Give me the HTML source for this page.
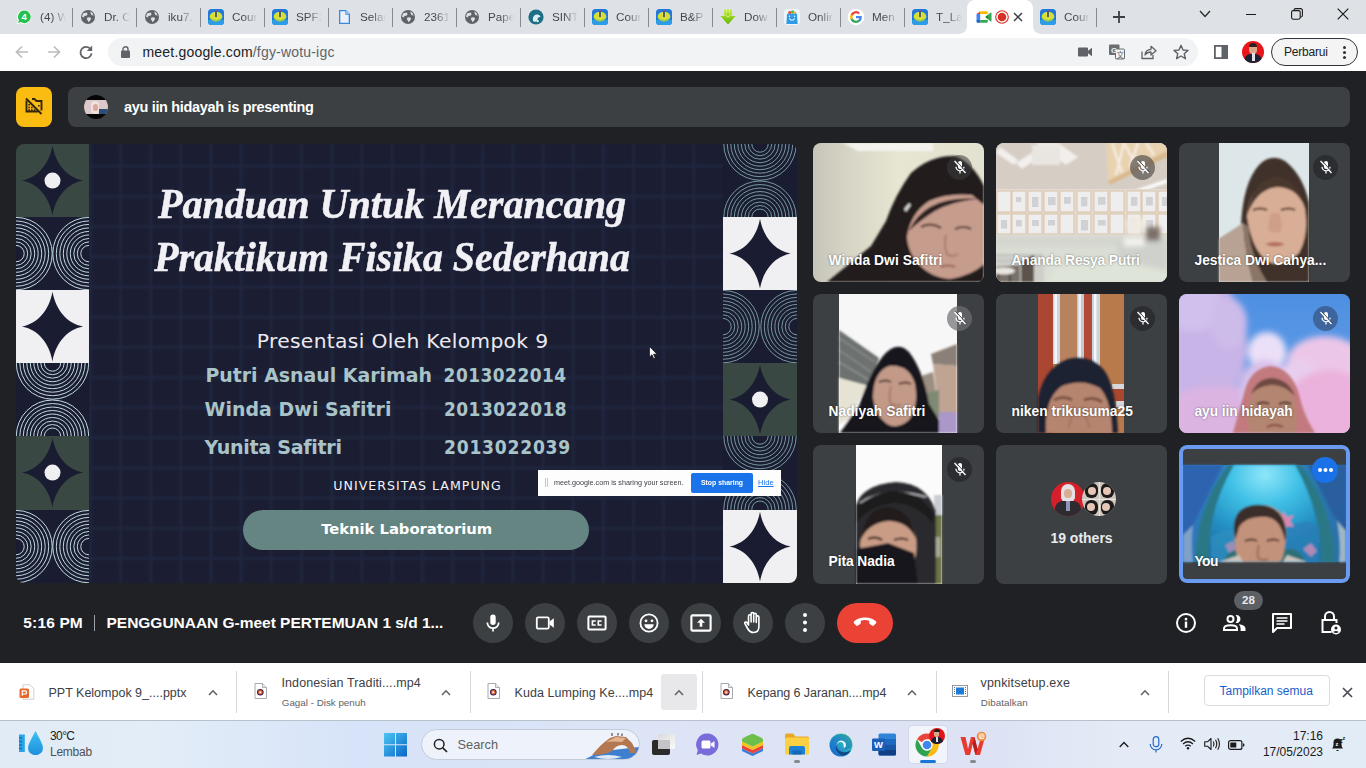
<!DOCTYPE html>
<html lang="id">
<head>
<meta charset="utf-8">
<title>Meet - fgy-wotu-igc</title>
<style>
*{box-sizing:border-box;margin:0;padding:0}
html,body{width:1366px;height:768px;overflow:hidden;background:#202124;font-family:"Liberation Sans","DejaVu Sans",sans-serif}
.abs,#root div,#root svg,#root span.a{position:absolute}
#root{position:relative;width:1366px;height:768px;overflow:hidden}
svg{overflow:visible}
/* ---------- chrome tab strip ---------- */
#tabs{left:0;top:0;width:1366px;height:34px;background:#dee1e6}
.tab{top:0;height:34px;width:64px}
.tab .fav{left:6px;top:9px;width:16px;height:16px}
.tab .tt{left:32px;top:8px;width:26px;height:18px;font-size:11.700px;line-height:18px;color:#45494d;white-space:nowrap;overflow:hidden;
 -webkit-mask-image:linear-gradient(90deg,#000 45%,transparent 100%);mask-image:linear-gradient(90deg,#000 45%,transparent 100%)}
.tab .sep{left:64px;top:8px;width:1px;height:19px;background:#878b90}
/* ---------- toolbar ---------- */
#toolbar{left:0;top:34px;width:1366px;height:37px;background:#fff}
#omni{left:108px;top:4px;width:1090px;height:28px;border-radius:14px;background:#f1f3f4}
/* ---------- meet ---------- */
#meet{left:0;top:71px;width:1366px;height:592px;background:#202124}
.tile{width:171px;height:139px;border-radius:8px;background:#3c4043;overflow:hidden}
.tile .nm{left:16px;bottom:13px;font-size:13px;font-weight:bold;color:#fff;white-space:nowrap;text-shadow:0 0 2px rgba(0,0,0,.55);letter-spacing:-.1px}
.tile .mic{right:13px;top:12px;width:26px;height:26px;border-radius:13px;background:rgba(32,33,36,.62)}
.cbtn{top:532px;width:40px;height:40px;border-radius:20px;background:#3c4043}
/* ---------- downloads ---------- */
#dl{left:0;top:663px;width:1366px;height:57px;background:#fff}
.t1{font-size:12.500px;color:#3c4043;white-space:nowrap;line-height:16px}
.t2{font-size:9.800px;color:#5f6368;white-space:nowrap;line-height:13px}
.dsep{top:8px;width:1px;height:42px;background:#d5d7db}
/* ---------- taskbar ---------- */
#task{left:0;top:720px;width:1366px;height:48px;border-top:1px solid #b9c1cc;background:linear-gradient(90deg,#e0ebf6 0%,#e3edf8 11%,#d7e3f8 26%,#dde4f6 50%,#dde3f4 73%,#e4ebf6 82%,#e2ecf6 100%)}
</style>
</head>
<body>
<div id="root">
<svg style="left:0;top:0;width:0;height:0"><defs><filter id="b1" x="-20%" y="-20%" width="140%" height="140%"><feGaussianBlur stdDeviation="1"/></filter><filter id="b2" x="-20%" y="-20%" width="140%" height="140%"><feGaussianBlur stdDeviation="2.500"/></filter><filter id="b5" x="-30%" y="-30%" width="160%" height="160%"><feGaussianBlur stdDeviation="3.200"/></filter></defs></svg>
<div id="tabs">
<div class="tab" style="left:8px"><svg class="fav" style="left:8px" viewBox="0 0 16 16"><path d="M8.2 0.8 A7 7 0 1 1 4.6 13.9 L0.8 15.2 2.1 11.5 A7 7 0 0 1 8.2 0.8Z" fill="#fff"/><path d="M8.2 1.6 A6.3 6.3 0 1 1 4.8 13.1 L2 14 3 11.3 A6.3 6.3 0 0 1 8.2 1.6Z" fill="#25c14f"/><text x="8.2" y="11.2" font-size="9.5" font-weight="bold" fill="#fff" text-anchor="middle" font-family="Liberation Sans, sans-serif">4</text></svg><div class="tt">(4) W</div><div class="sep"></div></div>
<div class="tab" style="left:72px"><svg class="fav" style="left:8px" viewBox="0 0 16 16"><circle cx="8" cy="8" r="7" fill="#5f6368"/><path d="M3.2 4.2 L6.6 3.4 7.6 5 6.8 6.6 4.6 7 3.6 8.6 2 7.6Z M7.4 8.4 L10 8.2 11.2 9.6 10 11.8 8.6 13.2 7.8 11.4 6.8 10.2Z M10.4 2.6 L12.6 4 13.6 6.6 11.8 6.2 10.6 4.6Z" fill="#dee1e6"/></svg><div class="tt">Dr. C</div><div class="sep"></div></div>
<div class="tab" style="left:136px"><svg class="fav" style="left:8px" viewBox="0 0 16 16"><circle cx="8" cy="8" r="7" fill="#5f6368"/><path d="M3.2 4.2 L6.6 3.4 7.6 5 6.8 6.6 4.6 7 3.6 8.6 2 7.6Z M7.4 8.4 L10 8.2 11.2 9.6 10 11.8 8.6 13.2 7.8 11.4 6.8 10.2Z M10.4 2.6 L12.6 4 13.6 6.6 11.8 6.2 10.6 4.6Z" fill="#dee1e6"/></svg><div class="tt">iku7.</div><div class="sep"></div></div>
<div class="tab" style="left:200px"><svg class="fav" style="left:8px" viewBox="0 0 16 16"><rect x="0" y="0" width="16" height="16" rx="3.500" fill="#1f78de"/><path d="M0 11 H16 V12.500 A3.500 3.500 0 0 1 12.500 16 H3.500 A3.500 3.500 0 0 1 0 12.500Z" fill="#2c9bea"/><ellipse cx="8" cy="7.600" rx="6.300" ry="4.900" fill="#d9df38"/><path d="M1.900 8.800 Q8 13.500 14.100 8.800 Q13 12.300 8 12.500 Q3 12.300 1.900 8.800Z" fill="#7fc45a"/><rect x="7.300" y="2" width="1.400" height="6" fill="#1d2f7a"/><rect x="7.300" y="1.200" width="1.400" height="1.600" fill="#b0306a"/></svg><div class="tt">Cour</div><div class="sep"></div></div>
<div class="tab" style="left:264px"><svg class="fav" style="left:8px" viewBox="0 0 16 16"><rect x="0" y="0" width="16" height="16" rx="3.500" fill="#1f78de"/><path d="M0 11 H16 V12.500 A3.500 3.500 0 0 1 12.500 16 H3.500 A3.500 3.500 0 0 1 0 12.500Z" fill="#2c9bea"/><ellipse cx="8" cy="7.600" rx="6.300" ry="4.900" fill="#d9df38"/><path d="M1.900 8.800 Q8 13.500 14.100 8.800 Q13 12.300 8 12.500 Q3 12.300 1.900 8.800Z" fill="#7fc45a"/><rect x="7.300" y="2" width="1.400" height="6" fill="#1d2f7a"/><rect x="7.300" y="1.200" width="1.400" height="1.600" fill="#b0306a"/></svg><div class="tt">SPF2</div><div class="sep"></div></div>
<div class="tab" style="left:328px"><svg class="fav" style="left:8px" viewBox="0 0 16 16"><path d="M3 1 H10 L14 5 V15 H3Z" fill="#3b86e0"/><path d="M4.3 2.3 H9.4 V5.7 H12.7 V13.7 H4.3Z" fill="#e9f2fc"/><path d="M10 1 L14 5 H10Z" fill="#8fbdf0"/></svg><div class="tt">Selar</div><div class="sep"></div></div>
<div class="tab" style="left:392px"><svg class="fav" style="left:8px" viewBox="0 0 16 16"><circle cx="8" cy="8" r="7" fill="#5f6368"/><path d="M3.2 4.2 L6.6 3.4 7.6 5 6.8 6.6 4.6 7 3.6 8.6 2 7.6Z M7.4 8.4 L10 8.2 11.2 9.6 10 11.8 8.6 13.2 7.8 11.4 6.8 10.2Z M10.4 2.6 L12.6 4 13.6 6.6 11.8 6.2 10.6 4.6Z" fill="#dee1e6"/></svg><div class="tt">2361</div><div class="sep"></div></div>
<div class="tab" style="left:456px"><svg class="fav" style="left:8px" viewBox="0 0 16 16"><circle cx="8" cy="8" r="7" fill="#5f6368"/><path d="M3.2 4.2 L6.6 3.4 7.6 5 6.8 6.6 4.6 7 3.6 8.6 2 7.6Z M7.4 8.4 L10 8.2 11.2 9.6 10 11.8 8.6 13.2 7.8 11.4 6.8 10.2Z M10.4 2.6 L12.6 4 13.6 6.6 11.8 6.2 10.6 4.6Z" fill="#dee1e6"/></svg><div class="tt">Pape</div><div class="sep"></div></div>
<div class="tab" style="left:520px"><svg class="fav" style="left:8px" viewBox="0 0 16 16"><circle cx="8" cy="8" r="7.6" fill="#1d6f86"/><path d="M5 12 Q4 7 8 5.5 Q12 5 12.5 8 Q10 7.5 9.5 10 Q9 12.5 7 13Z" fill="#dfeef2"/><circle cx="9.6" cy="12" r="1.2" fill="#dfeef2"/></svg><div class="tt">SINT</div><div class="sep"></div></div>
<div class="tab" style="left:584px"><svg class="fav" style="left:8px" viewBox="0 0 16 16"><rect x="0" y="0" width="16" height="16" rx="3.500" fill="#1f78de"/><path d="M0 11 H16 V12.500 A3.500 3.500 0 0 1 12.500 16 H3.500 A3.500 3.500 0 0 1 0 12.500Z" fill="#2c9bea"/><ellipse cx="8" cy="7.600" rx="6.300" ry="4.900" fill="#d9df38"/><path d="M1.900 8.800 Q8 13.500 14.100 8.800 Q13 12.300 8 12.500 Q3 12.300 1.900 8.800Z" fill="#7fc45a"/><rect x="7.300" y="2" width="1.400" height="6" fill="#1d2f7a"/><rect x="7.300" y="1.200" width="1.400" height="1.600" fill="#b0306a"/></svg><div class="tt">Cour</div><div class="sep"></div></div>
<div class="tab" style="left:648px"><svg class="fav" style="left:8px" viewBox="0 0 16 16"><rect x="0" y="0" width="16" height="16" rx="3.500" fill="#1f78de"/><path d="M0 11 H16 V12.500 A3.500 3.500 0 0 1 12.500 16 H3.500 A3.500 3.500 0 0 1 0 12.500Z" fill="#2c9bea"/><ellipse cx="8" cy="7.600" rx="6.300" ry="4.900" fill="#d9df38"/><path d="M1.900 8.800 Q8 13.500 14.100 8.800 Q13 12.300 8 12.500 Q3 12.300 1.900 8.800Z" fill="#7fc45a"/><rect x="7.300" y="2" width="1.400" height="6" fill="#1d2f7a"/><rect x="7.300" y="1.200" width="1.400" height="1.600" fill="#b0306a"/></svg><div class="tt">B&amp;P</div><div class="sep"></div></div>
<div class="tab" style="left:712px"><svg class="fav" style="left:8px" viewBox="0 0 16 16"><defs><linearGradient id="dg" x1="0" y1="0" x2="0" y2="1"><stop offset="0" stop-color="#c4ee3a"/><stop offset="1" stop-color="#5fb400"/></linearGradient></defs><path d="M4.200 0.500 H11.800 V7 H15.600 L8 15.500 L0.400 7 H4.200Z" fill="url(#dg)"/><path d="M6.500 0.500 V4 M9.500 0.500 V4" stroke="#e9f9a8" stroke-width=".8"/><path d="M4.500 5 L8 8.200 L11.500 5" fill="none" stroke="#e4f79a" stroke-width=".9"/></svg><div class="tt">Dow</div><div class="sep"></div></div>
<div class="tab" style="left:776px"><svg class="fav" style="left:8px" viewBox="0 0 16 16"><rect x="0" y="0" width="16" height="16" rx="4" fill="#eef6fd"/><circle cx="5.800" cy="3.600" r="1.700" fill="#e84a3a"/><circle cx="8.600" cy="3" r="1.700" fill="#59b846"/><circle cx="10.800" cy="4" r="1.500" fill="#f2b632"/><path d="M3 4.800 H13 L13.600 15 H2.400Z" fill="#2f9be8"/><path d="M5.300 9.500 Q8 13 10.700 9.500" fill="none" stroke="#fff" stroke-width="1.200"/><circle cx="5.500" cy="7.300" r=".7" fill="#fff"/><circle cx="10.500" cy="7.300" r=".7" fill="#fff"/></svg><div class="tt">Onlir</div><div class="sep"></div></div>
<div class="tab" style="left:840px"><svg class="fav" style="left:8px" viewBox="0 0 16 16"><circle cx="8" cy="8" r="8.300" fill="#fff"/><g transform="translate(1.400 1.400) scale(.825)"><path d="M15 8.2 c0-.5 0-1-.1-1.4 H8 v2.8 h3.9 a3.4 3.4 0 0 1-1.4 2.2 v1.8 h2.3 A7 7 0 0 0 15 8.200Z" fill="#4285f4"/><path d="M8 15.2 c1.900 0 3.600-.6 4.800-1.700 l-2.300-1.800 c-.7.400-1.500.7-2.500.7 a4.300 4.300 0 0 1-4-3 H1.600 v1.900 A7.200 7.200 0 0 0 8 15.200Z" fill="#34a853"/><path d="M4 9.400 a4.300 4.300 0 0 1 0-2.800 V4.700 H1.600 a7.200 7.200 0 0 0 0 6.500Z" fill="#fbbc05"/><path d="M8 3.600 c1.100 0 2 .4 2.800 1.100 l2-2 A7.200 7.200 0 0 0 1.600 4.700 L4 6.600 a4.300 4.300 0 0 1 4-3Z" fill="#ea4335"/></g></svg><div class="tt">Men</div><div class="sep"></div></div>
<div class="tab" style="left:904px"><svg class="fav" style="left:8px" viewBox="0 0 16 16"><rect x="0" y="0" width="16" height="16" rx="3.500" fill="#1f78de"/><path d="M0 11 H16 V12.500 A3.500 3.500 0 0 1 12.500 16 H3.500 A3.500 3.500 0 0 1 0 12.500Z" fill="#2c9bea"/><ellipse cx="8" cy="7.600" rx="6.300" ry="4.900" fill="#d9df38"/><path d="M1.900 8.800 Q8 13.500 14.100 8.800 Q13 12.300 8 12.500 Q3 12.300 1.900 8.800Z" fill="#7fc45a"/><rect x="7.300" y="2" width="1.400" height="6" fill="#1d2f7a"/><rect x="7.300" y="1.200" width="1.400" height="1.600" fill="#b0306a"/></svg><div class="tt">T_La</div></div>
<div style="left:959px;top:0;width:82px;height:34px"><svg width="82" height="34" viewBox="0 0 82 34" style="left:0;top:0"><path d="M0 34 A8 8 0 0 0 8 26 V8 A8 8 0 0 1 16 0 H66 A8 8 0 0 1 74 8 V26 A8 8 0 0 0 82 34Z" fill="#fff"/></svg></div><div class="tab" style="left:968px"><svg class="fav" style="left:8px" viewBox="0 0 16 16"><path d="M1 5 L4.500 2 H11 V5.500Z" fill="#ea4335" opacity="0"/><path d="M0.500 5 L4.200 2.200 V5Z" fill="#ea4335"/><path d="M4.200 2.200 H10.800 A1 1 0 0 1 11.800 3.200 V5.600 L9.400 8 11.800 10.400 V5 H4.200Z" fill="#fbbc04"/><rect x="4.200" y="5" width="5.300" height="6" fill="#fff"/><path d="M0.500 5 H4.200 V11 H0.500Z" fill="#4285f4"/><path d="M0.500 11 H4.200 V13.800 H1.500 A1 1 0 0 1 0.500 12.800Z" fill="#1967d2"/><path d="M4.200 11 H11.800 V12.800 A1 1 0 0 1 10.800 13.800 H4.200Z" fill="#34a853"/><path d="M9.400 8 L14.600 3.600 A.6.6 0 0 1 15.500 4 V12 A.6.6 0 0 1 14.600 12.400Z" fill="#34a853"/><path d="M9.400 8 L11.800 5.900 V10.100Z" fill="#188038"/></svg><svg style="left:27px;top:10px;width:14px;height:14px" viewBox="0 0 14 14"><circle cx="7" cy="7" r="6.300" fill="none" stroke="#d93025" stroke-width="1.100"/><circle cx="7" cy="7" r="4.300" fill="#d93025"/></svg><svg style="left:45px;top:12px;width:10px;height:10px" viewBox="0 0 10 10"><path d="M1 1 L9 9 M9 1 L1 9" stroke="#3c4043" stroke-width="1.500" fill="none"/></svg></div>
<div class="tab" style="left:1032px"><svg class="fav" style="left:8px" viewBox="0 0 16 16"><rect x="0" y="0" width="16" height="16" rx="3.500" fill="#1f78de"/><path d="M0 11 H16 V12.500 A3.500 3.500 0 0 1 12.500 16 H3.500 A3.500 3.500 0 0 1 0 12.500Z" fill="#2c9bea"/><ellipse cx="8" cy="7.600" rx="6.300" ry="4.900" fill="#d9df38"/><path d="M1.900 8.800 Q8 13.500 14.100 8.800 Q13 12.300 8 12.500 Q3 12.300 1.900 8.800Z" fill="#7fc45a"/><rect x="7.300" y="2" width="1.400" height="6" fill="#1d2f7a"/><rect x="7.300" y="1.200" width="1.400" height="1.600" fill="#b0306a"/></svg><div class="tt">Cour</div><div class="sep"></div></div>
<svg style="left:1112px;top:10px;width:14px;height:14px" viewBox="0 0 14 14"><path d="M7 1 V13 M1 7 H13" stroke="#3c4043" stroke-width="1.800" fill="none"/></svg>
<svg style="left:1199px;top:10px;width:12px;height:8px" viewBox="0 0 12 8"><path d="M1 1 L6 6.500 L11 1" stroke="#2b2b2b" stroke-width="1.300" fill="none"/></svg>
<div style="left:1246px;top:14px;width:10px;height:1px;background:#1b1b1b"></div>
<svg style="left:1291px;top:8px;width:12px;height:12px" viewBox="0 0 12 12"><rect x="0.600" y="2.600" width="8.600" height="8.600" rx="1.600" fill="none" stroke="#1b1b1b" stroke-width="1.100"/><path d="M3 2.600 V2 A1.500 1.500 0 0 1 4.500 0.600 H9.600 A1.800 1.800 0 0 1 11.400 2.400 V7.400 A1.500 1.500 0 0 1 10 9 H9.300" fill="none" stroke="#1b1b1b" stroke-width="1.100"/></svg>
<svg style="left:1337px;top:8px;width:12px;height:12px" viewBox="0 0 12 12"><path d="M0.700 0.700 L11.300 11.300 M11.300 0.700 L0.700 11.300" stroke="#1b1b1b" stroke-width="1.200" fill="none"/></svg>
</div>

<div id="toolbar">
<svg style="left:15px;top:11px;width:14px;height:14px" viewBox="0 0 14 14"><path d="M13 7 H2 M7 1.500 L1.500 7 L7 12.500" fill="none" stroke="#babcbe" stroke-width="1.700"/></svg>
<svg style="left:47px;top:11px;width:14px;height:14px" viewBox="0 0 14 14"><path d="M1 7 H12 M7 1.500 L12.500 7 L7 12.500" fill="none" stroke="#babcbe" stroke-width="1.700"/></svg>
<svg style="left:79px;top:11px;width:14px;height:14px" viewBox="0 0 14 14"><path d="M11.600 4.200 A5.600 5.600 0 1 0 12.600 8.400" fill="none" stroke="#5f6368" stroke-width="1.800"/><path d="M13.200 0.600 V6 H7.800Z" fill="#5f6368"/></svg>
<div id="omni">
<svg style="left:13px;top:8px;width:9px;height:12px" viewBox="0 0 9 12"><rect x="0" y="4.500" width="9" height="7.500" rx="1" fill="#5f6368"/><path d="M2 5 V3.200 A2.500 2.500 0 0 1 7 3.200 V5" fill="none" stroke="#5f6368" stroke-width="1.400"/></svg>
<div id="url" style="left:34.500px;top:5px;height:18px;line-height:18px;font-size:14px;color:#202124;white-space:nowrap;letter-spacing:.19px">meet.google.com<span style="color:#5f6368">/fgy-wotu-igc</span></div>
<!-- right icons in omnibox -->
<svg style="left:970px;top:8px;width:14px;height:12px" viewBox="0 0 14 12"><path d="M0 2.500 A1 1 0 0 1 1 1.500 H9 A1 1 0 0 1 10 2.500 V4.800 L14 1.800 V10.200 L10 7.200 V9.500 A1 1 0 0 1 9 10.500 H1 A1 1 0 0 1 0 9.500Z" fill="#5f6368"/></svg>
<svg style="left:1001px;top:6px;width:16px;height:16px" viewBox="0 0 16 16"><rect x="0" y="0.500" width="10.500" height="10.500" rx="1" fill="#6a6e73"/><rect x="6.500" y="5" width="9" height="10" rx="1" fill="#f1f3f4" stroke="#6a6e73" stroke-width="1"/><text x="5" y="9" font-size="8" font-weight="bold" fill="#f1f3f4" text-anchor="middle" font-family="Liberation Sans, sans-serif">G</text><text x="11.200" y="13.500" font-size="7.500" fill="#5f6368" text-anchor="middle" font-family="Liberation Sans, Noto Sans CJK SC, sans-serif">文</text></svg>
<svg style="left:1033px;top:6px;width:16px;height:16px" viewBox="0 0 16 16"><path d="M1 7.500 V14.500 H12 V11" fill="none" stroke="#5f6368" stroke-width="1.300"/><path d="M4 11 Q4.500 5.500 10 5.300 V2.300 L15 6.800 L10 11 V8 Q6 8 4 11Z" fill="none" stroke="#5f6368" stroke-width="1.300" stroke-linejoin="round"/></svg>
<svg style="left:1065px;top:6px;width:16px;height:16px" viewBox="0 0 16 16"><path d="M8 1.300 L10 6 L15 6.400 L11.200 9.700 L12.400 14.700 L8 12 L3.600 14.700 L4.800 9.700 L1 6.400 L6 6Z" fill="none" stroke="#5f6368" stroke-width="1.400" stroke-linejoin="round"/></svg>
</div>
<!-- side panel -->
<svg style="left:1214px;top:11px;width:14px;height:14px" viewBox="0 0 14 14"><rect x="0.900" y="0.900" width="12.200" height="12.200" fill="none" stroke="#5f6368" stroke-width="1.800"/><rect x="7.500" y="1" width="5.500" height="12" fill="#5f6368"/></svg>
<!-- profile avatar -->
<div style="left:1242px;top:7px;width:22px;height:22px;border-radius:11px;background:#e8151b;overflow:hidden">
 <div style="left:7px;top:3px;width:8px;height:10px;border-radius:4px;background:#d9a98a"></div>
 <div style="left:7px;top:2px;width:8px;height:4px;border-radius:4px 4px 0 0;background:#2a2220"></div>
 <div style="left:2px;top:13px;width:18px;height:12px;border-radius:7px 7px 0 0;background:#1d2233"></div>
 <div style="left:9.500px;top:12px;width:3px;height:8px;background:#dfe3ee"></div>
</div>
<!-- update pill -->
<div style="left:1271px;top:4px;width:87px;height:28px;border-radius:14px;border:1px solid #30343a;background:#f4f4f4">
 <div style="left:12px;top:5px;font-size:12px;line-height:16px;color:#202124;white-space:nowrap;letter-spacing:-.2px">Perbarui</div>
 <div style="left:71px;top:7px;width:3px;height:3px;border-radius:2px;background:#303236;box-shadow:0 5px 0 #303236,0 10px 0 #303236"></div>
</div>
</div>
<div id="meet">
<!-- top bar -->
<div style="left:16px;top:15.500px;width:36px;height:40.500px;border-radius:8px;background:#fbbc12">
<svg style="left:9px;top:10px;width:18px;height:18px" viewBox="0 0 18 18"><path d="M1.500 3.500 V14.500 H13 M7 2 H9.500 L11.500 4 H16.500 V13.500" fill="none" stroke="#33270a" stroke-width="1.900"/><path d="M3.300 7 h1.600 v1.600 h-1.600z M3.300 9.700 h1.600 v1.600 h-1.600z M3.300 12.300 h1.600 v1.600 h-1.600z M6 9.700 h1.600 v1.600 h-1.600z M6 12.300 h1.600 v1.600 h-1.600z M8.700 12.300 h1.600 v1.600 h-1.600z M13 8 h1.600 v1.600 h-1.600z" fill="#33270a"/><path d="M1 1.500 L16.500 17" stroke="#33270a" stroke-width="2"/></svg>
</div>
<div style="left:68px;top:15.500px;width:1282px;height:40.500px;border-radius:8px;background:#3c4043">
 <div style="left:16px;top:8px;width:24px;height:24px;border-radius:12px;background:#050505;overflow:hidden">
  <div style="left:0;top:5px;width:24px;height:14px;background:#dcc9cc"></div>
  <div style="left:7px;top:6px;width:8px;height:13px;border-radius:4px;background:#efe2dc"></div>
  <div style="left:9px;top:9px;width:5px;height:7px;border-radius:3px;background:#e0a79a"></div>
  <div style="left:15px;top:14px;width:9px;height:5px;background:#2b4f78"></div>
 </div>
 <div id="pres" style="left:56px;top:10px;font-size:14.500px;line-height:20px;font-weight:bold;color:#fff;white-space:nowrap;letter-spacing:-.33px">ayu iin hidayah is presenting</div>
</div>
<div id="slide" style="left:16px;top:72.5px;width:781px;height:439.4px;border-radius:8px;overflow:hidden;background:#1b1e33">
<svg style="left:0;top:0;width:781px;height:439.4px;filter:blur(1px)" viewBox="0 0 781 439.4"><g fill="#20273f"><rect x="73.0" y="0" width="2.800" height="439.4"/><rect x="103.2" y="0" width="2.800" height="439.4"/><rect x="133.3" y="0" width="2.800" height="439.4"/><rect x="163.5" y="0" width="2.800" height="439.4"/><rect x="193.7" y="0" width="2.800" height="439.4"/><rect x="223.9" y="0" width="2.800" height="439.4"/><rect x="254.0" y="0" width="2.800" height="439.4"/><rect x="284.2" y="0" width="2.800" height="439.4"/><rect x="314.4" y="0" width="2.800" height="439.4"/><rect x="344.5" y="0" width="2.800" height="439.4"/><rect x="374.7" y="0" width="2.800" height="439.4"/><rect x="404.9" y="0" width="2.800" height="439.4"/><rect x="435.0" y="0" width="2.800" height="439.4"/><rect x="465.2" y="0" width="2.800" height="439.4"/><rect x="495.4" y="0" width="2.800" height="439.4"/><rect x="525.6" y="0" width="2.800" height="439.4"/><rect x="555.7" y="0" width="2.800" height="439.4"/><rect x="585.9" y="0" width="2.800" height="439.4"/><rect x="616.1" y="0" width="2.800" height="439.4"/><rect x="646.2" y="0" width="2.800" height="439.4"/><rect x="676.4" y="0" width="2.800" height="439.4"/><rect x="73" y="20.8" width="635" height="2.800"/><rect x="73" y="51.0" width="635" height="2.800"/><rect x="73" y="81.1" width="635" height="2.800"/><rect x="73" y="111.3" width="635" height="2.800"/><rect x="73" y="141.5" width="635" height="2.800"/><rect x="73" y="171.7" width="635" height="2.800"/><rect x="73" y="201.8" width="635" height="2.800"/><rect x="73" y="232.0" width="635" height="2.800"/><rect x="73" y="262.2" width="635" height="2.800"/><rect x="73" y="292.3" width="635" height="2.800"/><rect x="73" y="322.5" width="635" height="2.800"/><rect x="73" y="352.7" width="635" height="2.800"/><rect x="73" y="382.8" width="635" height="2.800"/><rect x="73" y="413.0" width="635" height="2.800"/></g></svg>
<svg style="left:0px;top:0.00px;width:73px;height:73.53px;overflow:hidden" viewBox="0 0 73 73.53"><rect width="73" height="74.23333333333333" fill="#394842"/><path d="M36.5 1.81666666666667 C40.0 20.6 51.3 33.7 67.1 36.6 C51.3 39.5 40.0 52.6 36.5 71.4 C33.0 52.6 21.7 39.5 5.9 36.6 C21.7 33.7 33.0 20.6 36.5 1.8Z" fill="#1a1d32"/><circle cx="36.5" cy="36.61666666666667" r="8" fill="#f0eff2"/></svg>
<svg style="left:0px;top:73.23px;width:73px;height:73.53px;overflow:hidden" viewBox="0 0 73 73.53"><rect width="73" height="74.23333333333333" fill="#1a1d32"/><g fill="none" stroke="#c2dade" stroke-width="1.0"><circle cx="0" cy="36.61666666666667" r="8.20"/><circle cx="0" cy="36.61666666666667" r="11.70"/><circle cx="0" cy="36.61666666666667" r="15.20"/><circle cx="0" cy="36.61666666666667" r="18.70"/><circle cx="0" cy="36.61666666666667" r="22.20"/><circle cx="0" cy="36.61666666666667" r="25.70"/><circle cx="0" cy="36.61666666666667" r="29.20"/><circle cx="0" cy="36.61666666666667" r="32.70"/><circle cx="0" cy="36.61666666666667" r="36.20"/><circle cx="73" cy="36.61666666666667" r="8.20"/><circle cx="73" cy="36.61666666666667" r="11.70"/><circle cx="73" cy="36.61666666666667" r="15.20"/><circle cx="73" cy="36.61666666666667" r="18.70"/><circle cx="73" cy="36.61666666666667" r="22.20"/><circle cx="73" cy="36.61666666666667" r="25.70"/><circle cx="73" cy="36.61666666666667" r="29.20"/><circle cx="73" cy="36.61666666666667" r="32.70"/><circle cx="73" cy="36.61666666666667" r="36.20"/></g></svg>
<svg style="left:0px;top:146.47px;width:73px;height:73.53px;overflow:hidden" viewBox="0 0 73 73.53"><rect width="73" height="74.23333333333333" fill="#f0eff2"/><path d="M36.5 1.81666666666667 C40.0 20.6 51.3 33.7 67.1 36.6 C51.3 39.5 40.0 52.6 36.5 71.4 C33.0 52.6 21.7 39.5 5.9 36.6 C21.7 33.7 33.0 20.6 36.5 1.8Z" fill="#1a1d32"/></svg>
<svg style="left:0px;top:219.70px;width:73px;height:73.53px;overflow:hidden" viewBox="0 0 73 73.53"><rect width="73" height="74.23333333333333" fill="#1a1d32"/><g fill="none" stroke="#c2dade" stroke-width="1.0"><circle cx="36.5" cy="0" r="8.20"/><circle cx="36.5" cy="0" r="11.70"/><circle cx="36.5" cy="0" r="15.20"/><circle cx="36.5" cy="0" r="18.70"/><circle cx="36.5" cy="0" r="22.20"/><circle cx="36.5" cy="0" r="25.70"/><circle cx="36.5" cy="0" r="29.20"/><circle cx="36.5" cy="0" r="32.70"/><circle cx="36.5" cy="0" r="36.20"/><circle cx="36.5" cy="73.23333333333333" r="8.20"/><circle cx="36.5" cy="73.23333333333333" r="11.70"/><circle cx="36.5" cy="73.23333333333333" r="15.20"/><circle cx="36.5" cy="73.23333333333333" r="18.70"/><circle cx="36.5" cy="73.23333333333333" r="22.20"/><circle cx="36.5" cy="73.23333333333333" r="25.70"/><circle cx="36.5" cy="73.23333333333333" r="29.20"/><circle cx="36.5" cy="73.23333333333333" r="32.70"/><circle cx="36.5" cy="73.23333333333333" r="36.20"/></g></svg>
<svg style="left:0px;top:292.93px;width:73px;height:73.53px;overflow:hidden" viewBox="0 0 73 73.53"><rect width="73" height="74.23333333333333" fill="#394842"/><path d="M36.5 1.81666666666667 C40.0 20.6 51.3 33.7 67.1 36.6 C51.3 39.5 40.0 52.6 36.5 71.4 C33.0 52.6 21.7 39.5 5.9 36.6 C21.7 33.7 33.0 20.6 36.5 1.8Z" fill="#1a1d32"/><circle cx="36.5" cy="36.61666666666667" r="8" fill="#f0eff2"/></svg>
<svg style="left:0px;top:366.17px;width:73px;height:73.53px;overflow:hidden" viewBox="0 0 73 73.53"><rect width="73" height="74.23333333333333" fill="#1a1d32"/><g fill="none" stroke="#c2dade" stroke-width="1.0"><circle cx="0" cy="36.61666666666667" r="8.20"/><circle cx="0" cy="36.61666666666667" r="11.70"/><circle cx="0" cy="36.61666666666667" r="15.20"/><circle cx="0" cy="36.61666666666667" r="18.70"/><circle cx="0" cy="36.61666666666667" r="22.20"/><circle cx="0" cy="36.61666666666667" r="25.70"/><circle cx="0" cy="36.61666666666667" r="29.20"/><circle cx="0" cy="36.61666666666667" r="32.70"/><circle cx="0" cy="36.61666666666667" r="36.20"/><circle cx="73" cy="36.61666666666667" r="8.20"/><circle cx="73" cy="36.61666666666667" r="11.70"/><circle cx="73" cy="36.61666666666667" r="15.20"/><circle cx="73" cy="36.61666666666667" r="18.70"/><circle cx="73" cy="36.61666666666667" r="22.20"/><circle cx="73" cy="36.61666666666667" r="25.70"/><circle cx="73" cy="36.61666666666667" r="29.20"/><circle cx="73" cy="36.61666666666667" r="32.70"/><circle cx="73" cy="36.61666666666667" r="36.20"/></g></svg>
<svg style="left:707px;top:0.00px;width:74px;height:73.53px;overflow:hidden" viewBox="0 0 74 73.53"><rect width="74" height="74.23333333333333" fill="#1a1d32"/><g fill="none" stroke="#8fb6ba" stroke-width="0.8"><circle cx="37.0" cy="0" r="8.20"/><circle cx="37.0" cy="0" r="11.70"/><circle cx="37.0" cy="0" r="15.20"/><circle cx="37.0" cy="0" r="18.70"/><circle cx="37.0" cy="0" r="22.20"/><circle cx="37.0" cy="0" r="25.70"/><circle cx="37.0" cy="0" r="29.20"/><circle cx="37.0" cy="0" r="32.70"/><circle cx="37.0" cy="0" r="36.20"/><circle cx="37.0" cy="73.23333333333333" r="8.20"/><circle cx="37.0" cy="73.23333333333333" r="11.70"/><circle cx="37.0" cy="73.23333333333333" r="15.20"/><circle cx="37.0" cy="73.23333333333333" r="18.70"/><circle cx="37.0" cy="73.23333333333333" r="22.20"/><circle cx="37.0" cy="73.23333333333333" r="25.70"/><circle cx="37.0" cy="73.23333333333333" r="29.20"/><circle cx="37.0" cy="73.23333333333333" r="32.70"/><circle cx="37.0" cy="73.23333333333333" r="36.20"/></g></svg>
<svg style="left:707px;top:73.23px;width:74px;height:73.53px;overflow:hidden" viewBox="0 0 74 73.53"><rect width="74" height="74.23333333333333" fill="#f0eff2"/><path d="M37.0 1.81666666666667 C40.5 20.6 51.8 33.7 67.6 36.6 C51.8 39.5 40.5 52.6 37.0 71.4 C33.5 52.6 22.2 39.5 6.4 36.6 C22.2 33.7 33.5 20.6 37.0 1.8Z" fill="#1a1d32"/></svg>
<svg style="left:707px;top:146.47px;width:74px;height:73.53px;overflow:hidden" viewBox="0 0 74 73.53"><rect width="74" height="74.23333333333333" fill="#1a1d32"/><g fill="none" stroke="#8fb6ba" stroke-width="0.8"><circle cx="0" cy="36.61666666666667" r="8.20"/><circle cx="0" cy="36.61666666666667" r="11.70"/><circle cx="0" cy="36.61666666666667" r="15.20"/><circle cx="0" cy="36.61666666666667" r="18.70"/><circle cx="0" cy="36.61666666666667" r="22.20"/><circle cx="0" cy="36.61666666666667" r="25.70"/><circle cx="0" cy="36.61666666666667" r="29.20"/><circle cx="0" cy="36.61666666666667" r="32.70"/><circle cx="0" cy="36.61666666666667" r="36.20"/><circle cx="74" cy="36.61666666666667" r="8.20"/><circle cx="74" cy="36.61666666666667" r="11.70"/><circle cx="74" cy="36.61666666666667" r="15.20"/><circle cx="74" cy="36.61666666666667" r="18.70"/><circle cx="74" cy="36.61666666666667" r="22.20"/><circle cx="74" cy="36.61666666666667" r="25.70"/><circle cx="74" cy="36.61666666666667" r="29.20"/><circle cx="74" cy="36.61666666666667" r="32.70"/><circle cx="74" cy="36.61666666666667" r="36.20"/></g></svg>
<svg style="left:707px;top:219.70px;width:74px;height:73.53px;overflow:hidden" viewBox="0 0 74 73.53"><rect width="74" height="74.23333333333333" fill="#394842"/><path d="M37.0 1.81666666666667 C40.5 20.6 51.8 33.7 67.6 36.6 C51.8 39.5 40.5 52.6 37.0 71.4 C33.5 52.6 22.2 39.5 6.4 36.6 C22.2 33.7 33.5 20.6 37.0 1.8Z" fill="#1a1d32"/><circle cx="37.0" cy="36.61666666666667" r="8" fill="#f0eff2"/></svg>
<svg style="left:707px;top:292.93px;width:74px;height:73.53px;overflow:hidden" viewBox="0 0 74 73.53"><rect width="74" height="74.23333333333333" fill="#1a1d32"/><g fill="none" stroke="#8fb6ba" stroke-width="0.8"><circle cx="37.0" cy="0" r="8.20"/><circle cx="37.0" cy="0" r="11.70"/><circle cx="37.0" cy="0" r="15.20"/><circle cx="37.0" cy="0" r="18.70"/><circle cx="37.0" cy="0" r="22.20"/><circle cx="37.0" cy="0" r="25.70"/><circle cx="37.0" cy="0" r="29.20"/><circle cx="37.0" cy="0" r="32.70"/><circle cx="37.0" cy="0" r="36.20"/><circle cx="37.0" cy="73.23333333333333" r="8.20"/><circle cx="37.0" cy="73.23333333333333" r="11.70"/><circle cx="37.0" cy="73.23333333333333" r="15.20"/><circle cx="37.0" cy="73.23333333333333" r="18.70"/><circle cx="37.0" cy="73.23333333333333" r="22.20"/><circle cx="37.0" cy="73.23333333333333" r="25.70"/><circle cx="37.0" cy="73.23333333333333" r="29.20"/><circle cx="37.0" cy="73.23333333333333" r="32.70"/><circle cx="37.0" cy="73.23333333333333" r="36.20"/></g></svg>
<svg style="left:707px;top:366.17px;width:74px;height:73.53px;overflow:hidden" viewBox="0 0 74 73.53"><rect width="74" height="74.23333333333333" fill="#f0eff2"/><path d="M37.0 1.81666666666667 C40.5 20.6 51.8 33.7 67.6 36.6 C51.8 39.5 40.5 52.6 37.0 71.4 C33.5 52.6 22.2 39.5 6.4 36.6 C22.2 33.7 33.5 20.6 37.0 1.8Z" fill="#1a1d32"/></svg>
<div id="t1" style="left:76.2px;top:35.2px;width:600px;text-align:center;font-size:42px;line-height:50px;color:#f1f0f4;white-space:nowrap;transform:scaleX(.955);font-family:'Liberation Serif','DejaVu Serif',serif;font-style:italic;font-weight:bold;-webkit-text-stroke:.55px #f1f0f4">Panduan Untuk Merancang</div>
<div id="t2" style="left:76.1px;top:88.0px;width:600px;text-align:center;font-size:42px;line-height:50px;color:#f1f0f4;white-space:nowrap;transform:scaleX(.948);font-family:'Liberation Serif','DejaVu Serif',serif;font-style:italic;font-weight:bold;-webkit-text-stroke:.55px #f1f0f4">Praktikum Fisika Sederhana</div>
<div id="t3" style="left:240.8px;top:184.2px;font-size:20.300px;line-height:26px;color:#eceaf0;white-space:nowrap;letter-spacing:0.31px;font-family:'DejaVu Sans','Liberation Sans',sans-serif">Presentasi Oleh Kelompok 9</div>
<div id="n0" style="left:189.4px;top:218.5px;font-size:18.9px;letter-spacing:0.015px;line-height:26px;font-weight:bold;color:#a9c4c8;white-space:nowrap;font-family:'DejaVu Sans','Liberation Sans',sans-serif">Putri Asnaul Karimah</div><div id="m0" style="left:427.6px;top:218.5px;font-size:18.9px;letter-spacing:0.48px;line-height:26px;font-weight:bold;color:#a9c4c8;white-space:nowrap;font-family:'DejaVu Sans Condensed','DejaVu Sans',sans-serif;font-stretch:condensed">2013022014</div>
<div id="n1" style="left:188.5px;top:252.3px;font-size:18.9px;letter-spacing:0.08px;line-height:26px;font-weight:bold;color:#a9c4c8;white-space:nowrap;font-family:'DejaVu Sans','Liberation Sans',sans-serif">Winda Dwi Safitri</div><div id="m1" style="left:428.0px;top:252.3px;font-size:18.9px;letter-spacing:0.48px;line-height:26px;font-weight:bold;color:#a9c4c8;white-space:nowrap;font-family:'DejaVu Sans Condensed','DejaVu Sans',sans-serif;font-stretch:condensed">2013022018</div>
<div id="n2" style="left:188.5px;top:291.6px;font-size:19.1px;letter-spacing:-0.3px;line-height:26px;font-weight:bold;color:#a9c4c8;white-space:nowrap;font-family:'DejaVu Sans','Liberation Sans',sans-serif">Yunita Safitri</div><div id="m2" style="left:428.0px;top:291.6px;font-size:19.1px;letter-spacing:0.75px;line-height:26px;font-weight:bold;color:#a9c4c8;white-space:nowrap;font-family:'DejaVu Sans Condensed','DejaVu Sans',sans-serif;font-stretch:condensed">2013022039</div>
<div id="t4" style="left:317.3px;top:333.1px;font-size:12.600px;line-height:18px;color:#f3f2f6;white-space:nowrap;letter-spacing:1.0px;font-family:'DejaVu Sans','Liberation Sans',sans-serif">UNIVERSITAS LAMPUNG</div>
<div style="left:227.4px;top:366.5px;width:345.400px;height:39.800px;border-radius:20px;background:#658582"></div><div id="t5" style="left:305.2px;top:374.9px;font-size:14.800px;line-height:22px;font-weight:bold;color:#fff;white-space:nowrap;letter-spacing:-0.04px;font-family:'DejaVu Sans','Liberation Sans',sans-serif">Teknik Laboratorium</div>
<div style="left:522px;top:326.500px;width:243px;height:26px;background:#fdfdfe;filter:blur(.3px)"><div style="left:7px;top:8px;width:1px;height:9px;background:#c4c7cc;box-shadow:2px 0 0 #c4c7cc"></div><div style="left:16px;top:7px;font-size:7.200px;line-height:12px;color:#3a3d42;white-space:nowrap">meet.google.com is sharing your screen.</div><div style="left:153px;top:3px;width:62px;height:20px;border-radius:2px;background:#1a73e8"><div style="left:0;top:4px;width:62px;text-align:center;font-size:6.900px;line-height:12px;font-weight:bold;color:#fff;white-space:nowrap">Stop sharing</div></div><div style="left:220px;top:7px;font-size:7.600px;line-height:12px;color:#1a73e8;text-decoration:underline;white-space:nowrap">Hide</div></div>
<svg style="left:633px;top:202.500px;width:9px;height:14px" viewBox="0 0 9 14"><path d="M0.500 0.500 V11 L3 8.700 L4.800 12.800 L6.300 12.100 L4.500 8.200 H8Z" fill="#fff" stroke="#111" stroke-width=".7"/></svg>
</div>

<div class="tile" style="left:813px;top:72.3px;height:138.5px"><svg style="left:0px;top:0;width:171px;height:139px" viewBox="0 0 171 139" preserveAspectRatio="none"><defs><linearGradient id="gw1" x1="0" x2="1"><stop offset="0" stop-color="#c6c5b9"/><stop offset=".25" stop-color="#d9d8c8"/><stop offset=".5" stop-color="#e7e6d2"/><stop offset="1" stop-color="#e3e1cf"/></linearGradient></defs>
<rect width="171" height="139" fill="url(#gw1)"/><path d="M30 0 L45 8 H120 V0Z" fill="#f3f2ee" filter="url(#b1)"/>
<g filter="url(#b1)"><path d="M14 139 L58 103 L73 78 Q82 52 98 30 Q118 12 142 13 Q160 20 171 43 V139Z" fill="#231d1e"/>
<path d="M94 93 Q98 70 116 58 Q135 50 159 52 L171 62 V121 Q160 132 137 136 Q112 134 99 112 Q94 102 94 93Z" fill="#c69c8d"/>
<path d="M96 88 Q112 52 165 56 Q140 58 122 68 Q106 78 96 88Z" fill="#2b2223"/>
<path d="M108 84 q10 -5 20 1 M142 86 q9 -4 16 0" stroke="#5b3f3a" stroke-width="2.200" fill="none"/>
<path d="M133 92 q-3 14 2 20 q6 2 10 -1" stroke="#a87c6f" stroke-width="2" fill="none"/>
<path d="M128 124 q8 -3 14 0" stroke="#9a5f5a" stroke-width="2.200" fill="none"/>
<path d="M91 66 l5 -6 l2 2 l-5 7z" fill="#d8d8d8"/></g></svg><div style="left:134px;top:11.500px;width:25px;height:25px;border-radius:13px;background:rgba(60,60,64,.55)"><svg style="left:6px;top:5px;width:14px;height:15px" viewBox="0 0 14 15"><path d="M7 1 A2 2 0 0 1 9 3 V7 A2 2 0 0 1 5 7 V3 A2 2 0 0 1 7 1Z" fill="#fff"/><path d="M3 6.800 A4 4 0 0 0 11 6.800 M7 11 V13.500" fill="none" stroke="#fff" stroke-width="1.300"/><path d="M1.500 1 L12.500 13" stroke="#fff" stroke-width="1.300"/><path d="M2.500 0.200 L13.500 12.200" stroke="#4a4d51" stroke-width="1"/></svg></div><div id="p0" class="nm" style="left:15.500px;top:108.4px;font-size:13.800px;line-height:17px;letter-spacing:0.08px">Winda Dwi Safitri</div></div>
<div class="tile" style="left:996px;top:72.3px;height:138.5px"><svg style="left:0px;top:0;width:171px;height:139px" viewBox="0 0 171 139" preserveAspectRatio="none"><rect width="171" height="139" fill="#ddd5cc"/>
<rect y="0" width="171" height="46" fill="#d6cec5"/>
<g filter="url(#b1)"><path d="M0 10 L18 22 L22 17 L4 4Z M40 0 L70 22 L82 14 L62 0Z M20 20 L42 6 L46 12 L26 26Z" fill="#f2efec"/><rect x="36" y="2" width="28" height="20" fill="#e9e5e0"/>
<path d="M110 0 L112 38 L171 8 V0Z" fill="#e8d2b0"/><path d="M112 38 L171 8 V14 L114 42Z" fill="#d9b98d"/><path d="M116 0 l10 30 M128 0 l-8 32 M128 0 l12 22 M142 0 l-8 24 M150 0 l8 12" stroke="#f4ece0" stroke-width="2.500"/>
<path d="M130 50 L171 36 V40 L130 54Z" fill="#fbfbfb"/></g>
<rect y="46" width="171" height="48" fill="#e4dcd2"/><rect x="1" y="48" width="14" height="21" fill="#efeeee" stroke="#d9c3a8" stroke-width="1"/><rect x="1" y="71" width="14" height="20" fill="#efeeee" stroke="#d9c3a8" stroke-width="1"/><rect x="5" y="77" width="6.1" height="8.6" fill="#9b9ba3" opacity=".35"/><rect x="16" y="48" width="14" height="21" fill="#efeeee" stroke="#d9c3a8" stroke-width="1"/><rect x="20" y="54" width="5.2" height="5.1" fill="#9b9ba3" opacity=".35"/><rect x="16" y="71" width="14" height="20" fill="#efeeee" stroke="#d9c3a8" stroke-width="1"/><rect x="20" y="77" width="5.8" height="6.4" fill="#9b9ba3" opacity=".35"/><rect x="32" y="48" width="14" height="21" fill="#efeeee" stroke="#d9c3a8" stroke-width="1"/><rect x="36" y="54" width="6.4" height="10.0" fill="#9b9ba3" opacity=".35"/><rect x="32" y="71" width="14" height="20" fill="#efeeee" stroke="#d9c3a8" stroke-width="1"/><rect x="36" y="77" width="6.9" height="5.9" fill="#9b9ba3" opacity=".35"/><rect x="48" y="48" width="14" height="21" fill="#efeeee" stroke="#d9c3a8" stroke-width="1"/><rect x="52" y="54" width="7.6" height="8.1" fill="#9b9ba3" opacity=".35"/><rect x="48" y="71" width="14" height="20" fill="#efeeee" stroke="#d9c3a8" stroke-width="1"/><rect x="52" y="77" width="7.0" height="5.4" fill="#9b9ba3" opacity=".35"/><rect x="64" y="48" width="14" height="21" fill="#efeeee" stroke="#d9c3a8" stroke-width="1"/><rect x="68" y="54" width="6.8" height="6.8" fill="#9b9ba3" opacity=".35"/><rect x="64" y="71" width="14" height="20" fill="#efeeee" stroke="#d9c3a8" stroke-width="1"/><rect x="81" y="48" width="14" height="21" fill="#efeeee" stroke="#d9c3a8" stroke-width="1"/><rect x="85" y="54" width="6.4" height="9.3" fill="#9b9ba3" opacity=".35"/><rect x="81" y="71" width="14" height="20" fill="#efeeee" stroke="#d9c3a8" stroke-width="1"/><rect x="85" y="77" width="7.1" height="10.5" fill="#9b9ba3" opacity=".35"/><rect x="98" y="48" width="14" height="21" fill="#efeeee" stroke="#d9c3a8" stroke-width="1"/><rect x="102" y="54" width="7.4" height="7.7" fill="#9b9ba3" opacity=".35"/><rect x="98" y="71" width="14" height="20" fill="#efeeee" stroke="#d9c3a8" stroke-width="1"/><rect x="102" y="77" width="7.6" height="5.6" fill="#9b9ba3" opacity=".35"/><rect x="114" y="48" width="14" height="21" fill="#efeeee" stroke="#d9c3a8" stroke-width="1"/><rect x="114" y="71" width="14" height="20" fill="#efeeee" stroke="#d9c3a8" stroke-width="1"/><rect x="131" y="48" width="14" height="21" fill="#efeeee" stroke="#d9c3a8" stroke-width="1"/><rect x="135" y="54" width="6.3" height="8.8" fill="#9b9ba3" opacity=".35"/><rect x="131" y="71" width="14" height="20" fill="#efeeee" stroke="#d9c3a8" stroke-width="1"/><rect x="135" y="77" width="6.5" height="7.3" fill="#9b9ba3" opacity=".35"/><rect x="146" y="48" width="14" height="21" fill="#efeeee" stroke="#d9c3a8" stroke-width="1"/><rect x="150" y="54" width="6.8" height="8.5" fill="#9b9ba3" opacity=".35"/><rect x="146" y="71" width="14" height="20" fill="#efeeee" stroke="#d9c3a8" stroke-width="1"/><rect x="150" y="77" width="7.0" height="10.6" fill="#9b9ba3" opacity=".35"/><rect x="162" y="48" width="14" height="21" fill="#efeeee" stroke="#d9c3a8" stroke-width="1"/><rect x="166" y="54" width="8.0" height="9.0" fill="#9b9ba3" opacity=".35"/><rect x="162" y="71" width="14" height="20" fill="#efeeee" stroke="#d9c3a8" stroke-width="1"/>
<rect y="93" width="171" height="46" fill="#d9ddd3"/>
<g filter="url(#b2)"><rect x="0" y="93" width="171" height="10" fill="#d4d6cf"/><path d="M60 125 L171 110 V139 H50Z" fill="#dfe4d8"/><path d="M118 96 H171 V128 L125 118Z" fill="#cfd2cc"/><ellipse cx="140" cy="82" rx="10" ry="9" fill="#efeae2"/><rect x="150" y="84" width="14" height="14" fill="#7b6e68"/><rect x="128" y="95" width="20" height="8" fill="#f4f2ee"/></g>
<g filter="url(#b1)"><rect x="0" y="111" width="48" height="28" fill="#cfcfca"/><path d="M0 112 H46 M0 118 H40" stroke="#b9b9b5" stroke-width="1"/><path d="M25 118 L38 112 V139 H25Z" fill="#5d534e"/><path d="M0 124 L24 122 V139 H0Z" fill="#7a716b"/><ellipse cx="8" cy="128" rx="11" ry="3.500" fill="#e9e6e2"/><path d="M2 131 V139 M14 131 V139" stroke="#3d3835" stroke-width="1.500"/></g></svg><div style="left:134px;top:11.500px;width:25px;height:25px;border-radius:13px;background:rgba(95,90,86,.75)"><svg style="left:6px;top:5px;width:14px;height:15px" viewBox="0 0 14 15"><path d="M7 1 A2 2 0 0 1 9 3 V7 A2 2 0 0 1 5 7 V3 A2 2 0 0 1 7 1Z" fill="#fff"/><path d="M3 6.800 A4 4 0 0 0 11 6.800 M7 11 V13.500" fill="none" stroke="#fff" stroke-width="1.300"/><path d="M1.500 1 L12.500 13" stroke="#fff" stroke-width="1.300"/><path d="M2.500 0.200 L13.500 12.200" stroke="#4a4d51" stroke-width="1"/></svg></div><div id="p1" class="nm" style="left:15.500px;top:108.4px;font-size:13.800px;line-height:17px;letter-spacing:-0.12px">Ananda Resya Putri</div></div>
<div class="tile" style="left:1179px;top:72.3px;height:138.5px"><svg style="left:40px;top:0;width:90px;height:139px" viewBox="0 0 90 139" preserveAspectRatio="none"><rect width="90" height="139" fill="#dde7e9"/><g filter="url(#b1)">
<path d="M0 139 V96 L22 82 Q24 40 40 22 Q52 10 66 18 Q84 32 90 60 V139Z" fill="#3f3029"/>
<path d="M0 139 V96 L24 80 Q26 110 34 139Z" fill="#b7a293"/><path d="M24 80 Q26 110 34 139 H48 Q30 110 30 84Z" fill="#8a7466"/>
<path d="M28 74 Q30 44 52 38 Q78 36 86 66 Q90 92 80 110 Q66 124 52 120 Q34 112 28 74Z" fill="#d9ae96"/>
<path d="M28 72 Q34 34 60 34 Q80 38 88 70 Q80 44 58 44 Q38 46 28 72Z" fill="#4a382f"/>
<path d="M34 67 q8 -3 14 0 M62 67 q8 -3 14 0" stroke="#4e342c" stroke-width="2" fill="none"/>
<path d="M52 70 q-4 14 -2 18 q6 4 12 0 q2 -6 -2 -18" fill="#cf9f88"/>
<path d="M46 101 q10 -4 20 0 q-10 5 -20 0z" fill="#b26e62"/></g></svg><div style="left:134px;top:11.500px;width:25px;height:25px;border-radius:13px;background:rgba(32,33,36,.6)"><svg style="left:6px;top:5px;width:14px;height:15px" viewBox="0 0 14 15"><path d="M7 1 A2 2 0 0 1 9 3 V7 A2 2 0 0 1 5 7 V3 A2 2 0 0 1 7 1Z" fill="#fff"/><path d="M3 6.800 A4 4 0 0 0 11 6.800 M7 11 V13.500" fill="none" stroke="#fff" stroke-width="1.300"/><path d="M1.500 1 L12.500 13" stroke="#fff" stroke-width="1.300"/><path d="M2.500 0.200 L13.500 12.200" stroke="#4a4d51" stroke-width="1"/></svg></div><div id="p2" class="nm" style="left:15.500px;top:108.4px;font-size:13.800px;line-height:17px;letter-spacing:-0.01px">Jestica Dwi Cahya...</div></div>
<div class="tile" style="left:813px;top:223.3px;height:138.5px"><svg style="left:26px;top:0;width:118px;height:139px" viewBox="0 0 118 139" preserveAspectRatio="none"><rect width="118" height="139" fill="#f7f7f7"/><g filter="url(#b1)">
<path d="M0 36 L40 64 L30 92 L0 84Z" fill="#6d716f"/><path d="M0 44 L36 68 M0 56 L32 78 M0 68 L30 86" stroke="#8b908d" stroke-width="1.500"/>
<path d="M0 84 L28 92 L10 125 L0 131Z" fill="#e6e2d4"/><path d="M0 131 L10 125 L4 139 H0Z" fill="#fff"/>
<path d="M92 60 L118 50 V72 L94 70Z" fill="#8b8078"/><path d="M94 70 L118 72 V124 L100 120Z" fill="#bfa393"/><path d="M82 82 L94 78 L100 120 L90 116Z" fill="#9a8f80"/><path d="M84 100 L100 96 V124 L88 122Z" fill="#7f8a74"/>
<path d="M100 118 L118 118 V139 H100Z" fill="#ab97c8"/>
<path d="M0 139 L20 112 Q30 80 44 62 Q58 46 70 58 Q84 76 90 110 L100 126 V139Z" fill="#15171b"/>
<path d="M34 104 Q34 78 50 72 Q70 70 76 90 Q80 112 70 126 Q58 136 48 130 Q36 122 34 104Z" fill="#c39a88"/>
<path d="M40 88 q7 -3 12 0 M60 90 q7 -3 12 0" stroke="#4a302b" stroke-width="2" fill="none"/><path d="M52 92 q-3 12 0 18 q6 3 10 0" stroke="#a57c6c" stroke-width="2" fill="none"/><path d="M50 118 q8 -3 14 0" stroke="#a0625c" stroke-width="2.200" fill="none"/></g></svg><div style="left:134px;top:11.500px;width:25px;height:25px;border-radius:13px;background:rgba(110,110,112,.7)"><svg style="left:6px;top:5px;width:14px;height:15px" viewBox="0 0 14 15"><path d="M7 1 A2 2 0 0 1 9 3 V7 A2 2 0 0 1 5 7 V3 A2 2 0 0 1 7 1Z" fill="#fff"/><path d="M3 6.800 A4 4 0 0 0 11 6.800 M7 11 V13.500" fill="none" stroke="#fff" stroke-width="1.300"/><path d="M1.500 1 L12.500 13" stroke="#fff" stroke-width="1.300"/><path d="M2.500 0.200 L13.500 12.200" stroke="#4a4d51" stroke-width="1"/></svg></div><div id="p3" class="nm" style="left:15.500px;top:108.4px;font-size:13.800px;line-height:17px;letter-spacing:0.02px">Nadiyah Safitri</div></div>
<div class="tile" style="left:996px;top:223.3px;height:138.5px"><svg style="left:42px;top:0;width:86px;height:139px" viewBox="0 0 86 139" preserveAspectRatio="none"><rect width="86" height="139" fill="#b6794f"/>
<rect x="0" width="15" height="139" fill="#ab4633"/><rect x="15" width="7" height="70" fill="#cfd5dc"/><rect x="16.500" width="2.500" height="70" fill="#f4f6f9"/>
<rect x="22" width="17" height="70" fill="#b8825f"/><rect x="39" width="7" height="70" fill="#c3cad2"/><rect x="40.500" width="2.500" height="70" fill="#eef1f5"/>
<rect x="46" width="8" height="70" fill="#b14a36"/><rect x="54" width="8" height="72" fill="#cdd3da"/><rect x="56" width="2.500" height="72" fill="#f4f6f9"/>
<rect x="62" width="24" height="139" fill="#b97a4b"/><rect x="74" y="90" width="12" height="5" fill="#d8d8da"/><rect x="74" y="95" width="12" height="12" fill="#a8492f"/><rect x="78" y="107" width="8" height="6" fill="#d8d8da"/>
<g filter="url(#b1)"><path d="M0 139 V104 Q6 74 30 65 Q52 60 66 76 Q78 92 80 139Z" fill="#1d2030"/>
<path d="M8 139 Q6 104 24 92 Q44 84 62 94 Q74 108 74 139Z" fill="#b68570"/>
<path d="M16 106 q10 -5 18 0 M46 106 q10 -4 18 2" stroke="#6b4438" stroke-width="3" fill="none" opacity=".8"/><path d="M36 112 q-3 14 -6 22 M44 112 q4 12 8 22" stroke="#a27460" stroke-width="2" fill="none"/></g></svg><div style="left:134px;top:11.500px;width:25px;height:25px;border-radius:13px;background:rgba(32,33,36,.6)"><svg style="left:6px;top:5px;width:14px;height:15px" viewBox="0 0 14 15"><path d="M7 1 A2 2 0 0 1 9 3 V7 A2 2 0 0 1 5 7 V3 A2 2 0 0 1 7 1Z" fill="#fff"/><path d="M3 6.800 A4 4 0 0 0 11 6.800 M7 11 V13.500" fill="none" stroke="#fff" stroke-width="1.300"/><path d="M1.500 1 L12.500 13" stroke="#fff" stroke-width="1.300"/><path d="M2.500 0.200 L13.500 12.200" stroke="#4a4d51" stroke-width="1"/></svg></div><div id="p4" class="nm" style="left:15.500px;top:108.4px;font-size:13.800px;line-height:17px;letter-spacing:0.015px">niken trikusuma25</div></div>
<div class="tile" style="left:1179px;top:223.3px;height:138.5px"><svg style="left:0px;top:0;width:171px;height:139px" viewBox="0 0 171 139" preserveAspectRatio="none"><defs><linearGradient id="sk" x1="0" y1="0" x2="0" y2="1"><stop offset="0" stop-color="#4f8fe2"/><stop offset=".5" stop-color="#5b9ae6"/><stop offset="1" stop-color="#c9a9e0"/></linearGradient></defs>
<rect width="171" height="139" fill="url(#sk)"/>
<g filter="url(#b5)"><ellipse cx="22" cy="50" rx="46" ry="66" fill="#c8b4e7"/><ellipse cx="14" cy="14" rx="30" ry="24" fill="#cfc0ee"/><ellipse cx="50" cy="30" rx="18" ry="26" fill="#cdbbea"/><ellipse cx="40" cy="122" rx="62" ry="30" fill="#dbb4e2"/>
<ellipse cx="88" cy="58" rx="19" ry="20" fill="#ebe0f8"/><ellipse cx="86" cy="96" rx="26" ry="30" fill="#d8c0ea"/><ellipse cx="146" cy="68" rx="38" ry="26" fill="#ecc6e8"/><ellipse cx="120" cy="80" rx="18" ry="16" fill="#e9cdee"/><ellipse cx="150" cy="112" rx="42" ry="36" fill="#eab2dc"/></g>
<g filter="url(#b1)"><path d="M54 139 Q62 110 66 96 Q72 74 92 72 Q112 74 120 100 Q124 120 136 139Z" fill="#c27a7e"/>
<path d="M70 139 Q66 104 78 92 Q92 82 108 92 Q120 106 116 139Z" fill="#b48671"/><path d="M72 100 Q78 84 94 84 Q110 86 116 102 Q104 90 92 91 Q80 92 72 100Z" fill="#6e4a42"/>
<path d="M78 110 q7 -3 12 0 M100 110 q7 -3 12 0" stroke="#3d2722" stroke-width="2.200" fill="none"/><path d="M88 133 q8 -4 16 0" stroke="#8f4f4c" stroke-width="2.500" fill="none"/></g></svg><div style="left:134px;top:11.500px;width:25px;height:25px;border-radius:13px;background:rgba(50,70,110,.6)"><svg style="left:6px;top:5px;width:14px;height:15px" viewBox="0 0 14 15"><path d="M7 1 A2 2 0 0 1 9 3 V7 A2 2 0 0 1 5 7 V3 A2 2 0 0 1 7 1Z" fill="#fff"/><path d="M3 6.800 A4 4 0 0 0 11 6.800 M7 11 V13.500" fill="none" stroke="#fff" stroke-width="1.300"/><path d="M1.500 1 L12.500 13" stroke="#fff" stroke-width="1.300"/><path d="M2.500 0.200 L13.500 12.200" stroke="#4a4d51" stroke-width="1"/></svg></div><div id="p5" class="nm" style="left:15.500px;top:108.4px;font-size:13.800px;line-height:17px;letter-spacing:-0.1px">ayu iin hidayah</div></div>
<div class="tile" style="left:813px;top:374.2px;height:138.5px"><svg style="left:43px;top:0;width:86px;height:139px" viewBox="0 0 86 139" preserveAspectRatio="none"><rect width="86" height="139" fill="#fbfbfb"/><g filter="url(#b1)">
<rect x="78" y="50" width="8" height="22" fill="#c9ccd0"/><rect x="76" y="70" width="10" height="69" fill="#6c7346"/><rect x="78" y="92" width="6" height="20" fill="#a9ad9a"/>
<path d="M0 139 V60 Q6 40 40 37 Q70 38 80 66 V139Z" fill="#2b2b2d"/><path d="M4 58 Q30 40 70 52" stroke="#bfc3c7" stroke-width="1.500" fill="none"/><path d="M0 62 Q20 46 40 46 Q66 48 78 70 L76 78 Q60 58 38 58 Q14 60 0 78Z" fill="#1a1a1c"/>
<path d="M4 100 Q6 70 30 64 Q54 64 60 92 Q62 112 56 120 H8Z" fill="#c99c86"/><path d="M4 96 Q10 60 34 62 Q56 66 60 94 Q52 76 32 76 Q12 78 4 96Z" fill="#241f1f"/>
<path d="M12 94 q8 -3 14 1 M38 95 q8 -3 14 0" stroke="#3b2722" stroke-width="2.200" fill="none"/>
<path d="M0 104 L22 100 L32 98 L58 108 L62 139 H0Z" fill="#19191b"/></g></svg><div style="left:134px;top:11.500px;width:25px;height:25px;border-radius:13px;background:rgba(32,33,36,.6)"><svg style="left:6px;top:5px;width:14px;height:15px" viewBox="0 0 14 15"><path d="M7 1 A2 2 0 0 1 9 3 V7 A2 2 0 0 1 5 7 V3 A2 2 0 0 1 7 1Z" fill="#fff"/><path d="M3 6.800 A4 4 0 0 0 11 6.800 M7 11 V13.500" fill="none" stroke="#fff" stroke-width="1.300"/><path d="M1.500 1 L12.500 13" stroke="#fff" stroke-width="1.300"/><path d="M2.500 0.200 L13.500 12.200" stroke="#4a4d51" stroke-width="1"/></svg></div><div id="p6" class="nm" style="left:15.500px;top:107.9px;font-size:13.800px;line-height:17px;letter-spacing:-0.06px">Pita Nadia</div></div>
<div class="tile" style="left:996px;top:374.2px;height:138.5px"><div style="left:54.800px;top:37px;width:34px;height:34px;border-radius:17px;background:#d5202c;overflow:hidden"><div style="left:10px;top:2px;width:14px;height:18px;border-radius:7px 7px 5px 5px;background:#e4e0e4"></div><div style="left:13px;top:7px;width:8px;height:9px;border-radius:4px;background:#d9ac94"></div><div style="left:4px;top:19px;width:26px;height:18px;border-radius:8px 8px 0 0;background:#2d2b30"></div><div style="left:15px;top:19px;width:4px;height:10px;background:#8e96b8"></div></div>
<div style="left:86px;top:37px;width:34px;height:34px;border-radius:17px;background:#cfc6bd;overflow:hidden"><div style="left:3px;top:1px;width:13px;height:15px;border-radius:6px;background:#1d1a1c"></div><div style="left:6px;top:5px;width:8px;height:8px;border-radius:4px;background:#e6c6b4"></div><div style="left:19px;top:1px;width:13px;height:15px;border-radius:6px;background:#1d1a1c"></div><div style="left:21px;top:5px;width:8px;height:8px;border-radius:4px;background:#e6c6b4"></div><div style="left:3px;top:18px;width:13px;height:15px;border-radius:6px;background:#1d1a1c"></div><div style="left:5px;top:21px;width:8px;height:8px;border-radius:4px;background:#e6c6b4"></div><div style="left:19px;top:18px;width:13px;height:15px;border-radius:6px;background:#1d1a1c"></div><div style="left:20px;top:21px;width:8px;height:8px;border-radius:4px;background:#e6c6b4"></div><div style="left:0;top:16.500px;width:34px;height:1px;background:#e8e4e0"></div><div style="left:16.500px;top:0;width:1px;height:34px;background:#e8e4e0"></div></div>
<div id="oth" style="left:0;top:83.500px;width:171px;text-align:center;font-size:14px;line-height:18px;font-weight:bold;color:#e8eaed;white-space:nowrap">19 others</div></div>
<div class="tile" style="left:1179px;top:374.2px;height:138px;background:#3c4043"><svg style="left:4px;top:20px;width:163px;height:97px" viewBox="0 0 163 97" preserveAspectRatio="none"><defs><radialGradient id="aq" cx=".5" cy=".1" r=".9"><stop offset="0" stop-color="#8fe6fa"/><stop offset=".35" stop-color="#3fc0e6"/><stop offset=".7" stop-color="#2491c4"/><stop offset="1" stop-color="#1e6fa6"/></radialGradient><linearGradient id="ao" x1="0" x2="1"><stop offset="0" stop-color="#2f74b8"/><stop offset=".5" stop-color="#2a8cc4"/><stop offset="1" stop-color="#2b6ea8"/></linearGradient></defs>
<rect width="163" height="97" fill="url(#ao)"/><g filter="url(#b1)">
<path d="M0 0 H40 L10 60 L0 70Z" fill="#2d63b0"/><path d="M163 0 H125 L150 50 L163 66Z" fill="#2a5f9e"/>
<path d="M12 97 Q14 40 46 0 H117 Q150 40 152 97 H138 Q138 46 112 0 H51 Q24 46 26 97Z" fill="#2a7886"/>
<path d="M26 97 Q24 46 51 0 H112 Q138 46 138 97Z" fill="url(#aq)"/>
<path d="M28 72 Q50 58 70 70 L60 97 H28Z" fill="#2f8fbf" opacity=".8"/><path d="M100 66 Q120 50 136 62 V97 H104Z" fill="#2a7fb6" opacity=".8"/>
<path d="M100 46 l4 6 l7 -2 l-4 6 l4 6 l-7 -1 l-4 6 l-1 -7 l-7 -2 l7 -3z" fill="#d987b4"/><path d="M120 84 l8 -6 l6 8 l-6 6z" fill="#cf8fb8" opacity=".8"/><path d="M42 80 l8 -4 l4 8 l-8 4z" fill="#c892b8" opacity=".7"/>
<path d="M0 70 L10 60 Q8 80 10 97 H0Z" fill="#7fa0c8"/><path d="M163 66 L154 56 Q158 80 156 97 H163Z" fill="#9fb6c6"/>
<path d="M40 97 Q44 86 56 84 H110 Q120 88 122 97Z" fill="#2d6f78"/>
<path d="M52 78 Q48 50 66 42 Q86 36 98 48 Q106 60 102 80 Q100 97 96 97 H58 Q52 90 52 78Z" fill="#c2927a"/>
<path d="M52 74 Q46 44 70 40 Q96 38 102 60 Q104 70 102 76 Q98 54 84 52 Q64 50 56 62 Q54 70 52 74Z" fill="#3a2f2c"/>
<path d="M62 76 q7 -3 12 0 M84 76 q7 -3 12 0" stroke="#4d322a" stroke-width="2" fill="none"/><path d="M76 80 q-3 10 0 14 q5 2 9 0" stroke="#9c6e5a" stroke-width="2" fill="none"/>
<path d="M36 97 L56 90 L60 97Z M100 97 L104 90 L124 97Z" fill="#c9c4bc"/></g></svg><div style="left:0;top:0;width:171px;height:138px;border-radius:8px;border:4px solid #6b9bf0"></div><div style="left:133px;top:11.500px;width:26px;height:26px;border-radius:13px;background:#1b72e8"><div style="left:6px;top:11px;width:4px;height:4px;border-radius:2px;background:#fff;box-shadow:5.500px 0 0 #fff,11px 0 0 #fff"></div></div><div id="p7" class="nm" style="left:15.500px;top:107.9px;font-size:13.800px;line-height:17px;letter-spacing:-0.6px">You</div></div>

<!-- bottom bar -->
<div id="clk" style="left:23.300px;top:541.600px;font-size:15.500px;line-height:20px;font-weight:bold;color:#fff;white-space:nowrap;letter-spacing:.15px">5:16 PM</div>
<div style="left:94px;top:544px;width:1px;height:16px;background:#9aa0a6"></div>
<div id="mtitle" style="left:106.500px;top:541.600px;font-size:15.500px;line-height:20px;font-weight:bold;color:#fff;white-space:nowrap;letter-spacing:-.02px">PENGGUNAAN G-meet PERTEMUAN 1 s/d 1...</div>
<!-- mic -->
<div class="cbtn" style="left:473px;top:531.700px"><svg style="left:12px;top:10px;width:16px;height:20px" viewBox="0 0 16 20"><rect x="5.300" y="1.500" width="5.400" height="10.500" rx="2.700" fill="#fff"/><path d="M2.300 9.500 A5.700 5.700 0 0 0 13.700 9.500 M8 15.200 V18.500" fill="none" stroke="#fff" stroke-width="1.700"/></svg></div>
<!-- camera -->
<div class="cbtn" style="left:525px;top:531.700px"><svg style="left:10px;top:12px;width:20px;height:16px" viewBox="0 0 20 16"><rect x="1.800" y="2.300" width="12" height="11.400" rx="1.500" fill="none" stroke="#fff" stroke-width="1.800"/><path d="M14.500 6.500 L18.800 3.200 V12.800 L14.500 9.500Z" fill="#fff"/></svg></div>
<!-- cc -->
<div class="cbtn" style="left:577px;top:531.700px"><svg style="left:10px;top:12px;width:20px;height:16px" viewBox="0 0 20 16"><rect x="1.400" y="1.400" width="17.200" height="13.200" rx="1" fill="none" stroke="#fff" stroke-width="2"/><path d="M8.700 6 H5.400 V10 H8.700 M14.600 6 H11.300 V10 H14.600" fill="none" stroke="#fff" stroke-width="1.600"/></svg></div>
<!-- emoji -->
<div class="cbtn" style="left:629px;top:531.700px"><svg style="left:10px;top:10px;width:20px;height:20px" viewBox="0 0 20 20"><circle cx="10" cy="10" r="8.600" fill="none" stroke="#fff" stroke-width="1.800"/><circle cx="7" cy="7.800" r="1.400" fill="#fff"/><circle cx="13" cy="7.800" r="1.400" fill="#fff"/><path d="M5.300 11.300 H14.700 A4.700 4.700 0 0 1 5.300 11.300Z" fill="#fff"/></svg></div>
<!-- present -->
<div class="cbtn" style="left:681px;top:531.700px"><svg style="left:9px;top:11px;width:22px;height:18px" viewBox="0 0 22 18"><rect x="1.400" y="1.400" width="19.200" height="15.200" rx="1" fill="none" stroke="#fff" stroke-width="2.100"/><path d="M11 4.800 L15 8.800 H12.300 V12.800 H9.700 V8.800 H7Z" fill="#fff"/></svg></div>
<!-- hand -->
<div class="cbtn" style="left:733px;top:531.700px"><svg style="left:10px;top:8px;width:20px;height:24px" viewBox="0 0 20 24"><path d="M5.500 13 V5 A1.300 1.300 0 0 1 8.100 5 V11 V2.800 A1.300 1.300 0 0 1 10.700 2.800 V11 V3.600 A1.300 1.300 0 0 1 13.300 3.600 V11.500 V6.200 A1.300 1.300 0 0 1 15.900 6.200 V15.500 Q15.900 21.500 10.500 21.500 Q6.800 21.500 4.600 17.500 L1.800 12.300 Q1.500 11.300 2.600 11 Q3.600 10.900 4.300 12 L5.500 14Z" fill="none" stroke="#fff" stroke-width="1.600" stroke-linejoin="round"/></svg></div>
<!-- more -->
<div class="cbtn" style="left:785px;top:531.700px"><div style="left:18px;top:10.500px;width:4px;height:4px;border-radius:2px;background:#fff;box-shadow:0 7.500px 0 #fff,0 15px 0 #fff"></div></div>
<!-- hangup -->
<div style="left:837px;top:531.700px;width:56px;height:40px;border-radius:20px;background:#ea4335"><svg style="left:16px;top:13px;width:24px;height:12px" viewBox="0 0 24 12"><path d="M12 1.500 C7.500 1.500 3.500 3 1 5.600 C0.500 6.200 0.500 6.800 1 7.300 L3.200 9.500 C3.700 10 4.400 10 4.900 9.600 L7.300 7.900 C7.700 7.600 7.800 7.200 7.800 6.800 V4.800 C9 4.300 10.500 4.100 12 4.100 C13.500 4.100 15 4.300 16.200 4.800 V6.800 C16.200 7.200 16.300 7.600 16.700 7.900 L19.100 9.600 C19.600 10 20.300 10 20.800 9.500 L23 7.300 C23.500 6.800 23.500 6.200 23 5.600 C20.500 3 16.500 1.500 12 1.500Z" fill="#fff"/></svg></div>
<!-- right icons -->
<svg style="left:1175px;top:541px;width:22px;height:22px" viewBox="0 0 22 22"><circle cx="11" cy="11" r="9" fill="none" stroke="#fff" stroke-width="2"/><rect x="9.800" y="9.600" width="2.400" height="6.200" fill="#fff"/><rect x="9.800" y="5.900" width="2.400" height="2.400" fill="#fff"/></svg>
<svg style="left:1222px;top:543px;width:24px;height:18px" viewBox="0 0 24 18"><circle cx="8.500" cy="5" r="3" fill="none" stroke="#fff" stroke-width="2"/><path d="M2 16 V14.500 Q2 11.200 8.500 11.200 Q15 11.200 15 14.500 V16Z" fill="none" stroke="#fff" stroke-width="2"/><path d="M13.600 1.100 A4 4 0 1 1 13.600 8.900 A5.800 5.800 0 0 0 13.600 1.100Z M16.800 10.300 Q23.500 11 23.500 14.500 V17 H18.600 V14.500 Q18.600 12 16.800 10.300Z" fill="#fff"/></svg>
<svg style="left:1271px;top:541px;width:22px;height:22px" viewBox="0 0 22 22"><path d="M2 2 H20 V16 H6 L2 20Z" fill="none" stroke="#fff" stroke-width="2" stroke-linejoin="round"/><path d="M5.500 6 H16.500 M5.500 9 H16.500 M5.500 12 H13.500" stroke="#fff" stroke-width="1.600"/></svg>
<svg style="left:1320px;top:539px;width:22px;height:26px" viewBox="0 0 22 26"><path d="M5 10 V6.500 A4.500 4.500 0 0 1 14 6.500 V10" fill="none" stroke="#fff" stroke-width="2"/><path d="M11.500 22 H2.500 V10 H16.500 V13" fill="none" stroke="#fff" stroke-width="2"/><circle cx="16" cy="19.500" r="5" fill="#fff"/><circle cx="16" cy="18" r="1.500" fill="#202124"/><path d="M13.200 22 Q16 19.800 18.800 22 Q16 24 13.200 22Z" fill="#202124"/></svg>
<div style="left:1234px;top:519.500px;width:29px;height:19px;border-radius:9.500px;background:#5c5f64"><div style="left:0;top:2.500px;width:29px;text-align:center;font-size:11.500px;line-height:14px;font-weight:bold;color:#e8eaed">28</div></div>
</div>
<div id="dl">
<svg style="left:19px;top:21px;width:16px;height:16px" viewBox="0 0 16 16"><path d="M4 0.800 H11 L14.800 4.600 V15.200 H4Z" fill="#fff" stroke="#c9c9c9" stroke-width=".9"/><rect x="0.500" y="4.500" width="9.500" height="9.500" rx="1.500" fill="#e8682c"/><path d="M3.300 11.800 V6.800 H6 A1.600 1.600 0 0 1 6 10 H3.500" fill="none" stroke="#fff" stroke-width="1.200"/></svg><div id="d1" class="t1" style="left:48.500px;top:22px;letter-spacing:0px">PPT Kelompok 9_....pptx</div><svg style="left:208.3px;top:26px;width:10px;height:7px" viewBox="0 0 10 7"><path d="M1 6 L5 1.800 L9 6" fill="none" stroke="#5f6368" stroke-width="1.600"/></svg><div class="dsep" style="left:236px"></div>
<svg style="left:254.2px;top:20px;width:13px;height:16px" viewBox="0 0 13 16"><path d="M1 0.500 H8.500 L12.500 4.500 V15.500 H1Z" fill="#fff" stroke="#9aa0a6" stroke-width=".9"/><path d="M8.500 0.500 V4.500 H12.500" fill="#e8eaed" stroke="#9aa0a6" stroke-width=".8"/><circle cx="6.300" cy="9.300" r="3.300" fill="#3a1d4d"/><circle cx="6.300" cy="9.300" r="2.300" fill="#e9632a"/><path d="M5.500 7.900 L7.700 9.300 L5.500 10.700Z" fill="#fff"/></svg><div id="d2" class="t1" style="left:281.500px;top:12px;letter-spacing:0.1px">Indonesian Traditi....mp4</div><div id="d2b" class="t2" style="left:281.800px;top:33px;letter-spacing:0px">Gagal - Disk penuh</div><svg style="left:440.5px;top:26px;width:10px;height:7px" viewBox="0 0 10 7"><path d="M1 6 L5 1.800 L9 6" fill="none" stroke="#5f6368" stroke-width="1.600"/></svg><div class="dsep" style="left:469.500px"></div>
<svg style="left:487.4px;top:20px;width:13px;height:16px" viewBox="0 0 13 16"><path d="M1 0.500 H8.500 L12.500 4.500 V15.500 H1Z" fill="#fff" stroke="#9aa0a6" stroke-width=".9"/><path d="M8.500 0.500 V4.500 H12.500" fill="#e8eaed" stroke="#9aa0a6" stroke-width=".8"/><circle cx="6.300" cy="9.300" r="3.300" fill="#3a1d4d"/><circle cx="6.300" cy="9.300" r="2.300" fill="#e9632a"/><path d="M5.500 7.900 L7.700 9.300 L5.500 10.700Z" fill="#fff"/></svg><div id="d3" class="t1" style="left:514.500px;top:22px;letter-spacing:0.05px">Kuda Lumping Ke....mp4</div><div style="left:661px;top:11px;width:36px;height:36px;border-radius:3px;background:#e8e8ea"></div><svg style="left:674px;top:26px;width:10px;height:7px" viewBox="0 0 10 7"><path d="M1 6 L5 1.800 L9 6" fill="none" stroke="#5f6368" stroke-width="1.600"/></svg><div class="dsep" style="left:702px"></div>
<svg style="left:720.4px;top:20px;width:13px;height:16px" viewBox="0 0 13 16"><path d="M1 0.500 H8.500 L12.500 4.500 V15.500 H1Z" fill="#fff" stroke="#9aa0a6" stroke-width=".9"/><path d="M8.500 0.500 V4.500 H12.500" fill="#e8eaed" stroke="#9aa0a6" stroke-width=".8"/><circle cx="6.300" cy="9.300" r="3.300" fill="#3a1d4d"/><circle cx="6.300" cy="9.300" r="2.300" fill="#e9632a"/><path d="M5.500 7.900 L7.700 9.300 L5.500 10.700Z" fill="#fff"/></svg><div id="d4" class="t1" style="left:747.500px;top:22px;letter-spacing:-0.07px">Kepang 6 Jaranan....mp4</div><svg style="left:907px;top:26px;width:10px;height:7px" viewBox="0 0 10 7"><path d="M1 6 L5 1.800 L9 6" fill="none" stroke="#5f6368" stroke-width="1.600"/></svg><div class="dsep" style="left:935.500px"></div>
<svg style="left:952px;top:22px;width:16px;height:12px" viewBox="0 0 16 12"><rect x="0.500" y="0.500" width="15" height="11" fill="#fff" stroke="#8a8f98" stroke-width=".9"/><rect x="4" y="2.500" width="8" height="7" fill="#1d7ad6"/><path d="M2 2.500 h1 M2 4.500 h1 M2 6.500 h1 M2 8.500 h1 M13 2.500 h1 M13 4.500 h1 M13 6.500 h1 M13 8.500 h1" stroke="#5a6068" stroke-width=".9"/></svg><div id="d5" class="t1" style="left:980.500px;top:12px;letter-spacing:0.18px">vpnkitsetup.exe</div><div id="d5b" class="t2" style="left:980.800px;top:33px;letter-spacing:0.08px">Dibatalkan</div><svg style="left:1139.8px;top:26px;width:10px;height:7px" viewBox="0 0 10 7"><path d="M1 6 L5 1.800 L9 6" fill="none" stroke="#5f6368" stroke-width="1.600"/></svg><div class="dsep" style="left:1168px"></div>
<div style="left:1203.500px;top:12px;width:126px;height:31px;border:1px solid #dadce0;border-radius:4px;background:#fff"><div id="d6" style="left:15px;top:6.500px;font-size:12px;line-height:16px;color:#1a5dc8;white-space:nowrap;letter-spacing:0px">Tampilkan semua</div></div><svg style="left:1342px;top:23.500px;width:11px;height:11px" viewBox="0 0 11 11"><path d="M1 1 L10 10 M10 1 L1 10" stroke="#4a4d51" stroke-width="1.700" fill="none"/></svg></div>

<div id="task">
<svg style="left:19px;top:9.799999999999955px;width:25px;height:25px" viewBox="0 0 25 25"><defs><linearGradient id="dr" x1="0" y1="0" x2="0" y2="1"><stop offset="0" stop-color="#3cc0f2"/><stop offset="1" stop-color="#1e8fde"/></linearGradient></defs><rect x="0" y="3.500" width="5.800" height="17.500" fill="#2aa3e6"/><path d="M0 7 h3 M0 10.500 h3 M0 14 h3 M0 17.500 h3" stroke="#1576bd" stroke-width="1.300"/><path d="M16.500 0 Q21 8 23.500 14 Q25.500 21 19.500 23.500 Q16.500 24.500 13.500 23.500 Q7.500 21 9.500 14 Q12 8 16.500 0Z" fill="url(#dr)"/></svg><div id="wt1" style="left:50px;top:8.100000000000023px;font-size:12px;line-height:15px;color:#1b1b1b;white-space:nowrap;letter-spacing:-0.6px">30°C</div><div id="w2" style="left:50px;top:24.100000000000023px;font-size:12px;line-height:15px;color:#4d5156;white-space:nowrap;letter-spacing:-0.25px">Lembab</div><svg style="left:384px;top:11.600000000000023px;width:23px;height:23.400px" viewBox="0 0 23 23.400"><defs><linearGradient id="wl" x1="0" y1="0" x2="1" y2="1"><stop offset="0" stop-color="#4cc6f4"/><stop offset="1" stop-color="#0a66c6"/></linearGradient></defs><path d="M0 0 H11 V11.200 H0Z M12 0 H23 V11.200 H12Z M0 12.200 H11 V23.400 H0Z M12 12.200 H23 V23.400 H12Z" fill="url(#wl)"/></svg><div style="left:420.500px;top:8.200000000000045px;width:219px;height:31px;border-radius:15.500px;background:#eef3fb;border:1px solid #c3ccd9;overflow:hidden"><svg style="left:11px;top:8px;width:15px;height:15px" viewBox="0 0 15 15"><circle cx="6.200" cy="6.200" r="4.800" fill="none" stroke="#222" stroke-width="1.500"/><path d="M9.800 9.800 L14 14" stroke="#222" stroke-width="1.700"/></svg><div id="w3" style="left:36px;top:6px;font-size:12.800px;line-height:18px;color:#5c5f64;white-space:nowrap;letter-spacing:0px">Search</div><svg style="left:160px;top:3px;width:58px;height:28px" viewBox="0 0 58 28"><path d="M0 28 Q14 20 22 18 L58 14 V28Z" fill="#3f7fd0"/><path d="M12 24 Q26 20 40 24 Q26 28 12 24Z" fill="#dfeaf6"/><path d="M10 22 Q20 10 28 5 L34 3 L44 4 L50 10 L55 20 L48 20 Q46 12 40 12 Q34 12 30 18 Q24 22 10 22Z" fill="#b37852"/><path d="M24 9 L34 4 L44 5 L40 9 Q32 8 24 9Z" fill="#e2b38e"/><path d="M30 3 v-3 M36 2.500 v-2.500 M40 3 v-2.500" stroke="#5b4a42" stroke-width="1.200"/></svg></div><div style="left:658px;top:12.5px;width:17px;height:15px;border-radius:2px;background:linear-gradient(135deg,#d9d9db,#fbfbfc)"></div><div style="left:652px;top:19px;width:17.500px;height:15px;border-radius:2px;background:#2b2b2c"></div><div style="left:658px;top:19px;width:11.500px;height:8.500px;background:#c4c4c6"></div><svg style="left:696px;top:12px;width:23px;height:23px" viewBox="0 0 23 23"><path d="M11.500 0.500 A11 11 0 1 1 5 20.400 L0.500 22 L1.800 17.200 A11 11 0 0 1 11.500 0.500Z" fill="#7a6bdb"/><rect x="5.500" y="7.500" width="9" height="8" rx="1.500" fill="#fff"/><path d="M15 10.500 L18.500 8 V15 L15 12.500Z" fill="#fff"/></svg><svg style="left:741px;top:12px;width:23px;height:23px" viewBox="0 0 23 23"><path d="M1 15.500 L11.500 20.500 L22 15.500 V18 L11.500 23 L1 18Z" fill="#2e7fe0"/><path d="M1 12 L11.500 17 L22 12 V15.500 L11.500 20.500 L1 15.500Z" fill="#e8433a"/><path d="M1 8.500 L11.500 13.500 L22 8.500 V12 L11.500 17 L1 12Z" fill="#f4c21e"/><path d="M1 7 Q1 5.500 2.500 4.800 L10.500 1 Q11.500 0.600 12.500 1 L20.500 4.800 Q22 5.500 22 7 V8.500 L11.500 13.500 L1 8.500Z" fill="#6cc04a"/></svg><svg style="left:784.500px;top:12.299999999999955px;width:24px;height:21.500px" viewBox="0 0 24 21.500"><path d="M0 2 A1.500 1.500 0 0 1 1.500 0.500 H8 L10.500 3.500 H22.500 A1.500 1.500 0 0 1 24 5 V8 H0Z" fill="#e9a823"/><rect x="0" y="4.500" width="24" height="17" rx="1.500" fill="#fbd043"/><path d="M4 21.500 V15 A2 2 0 0 1 6 13 H18 A2 2 0 0 1 20 15 V21.500Z" fill="#1b82d8"/><rect x="7.500" y="17.500" width="9" height="4" fill="#1568b8"/></svg><div style="left:794px;top:39px;width:6px;height:3px;border-radius:1.500px;background:#858a92"></div><svg style="left:829px;top:11.5px;width:24px;height:24px" viewBox="0 0 24 24"><defs><linearGradient id="eg" x1="1" y1="0" x2="0" y2="1"><stop offset="0" stop-color="#6fe07a"/><stop offset=".35" stop-color="#2fc0b0"/><stop offset=".7" stop-color="#1f86d6"/><stop offset="1" stop-color="#1459b4"/></linearGradient></defs><circle cx="12" cy="12" r="11.500" fill="url(#eg)"/><path d="M1 11 Q3 2 12 1 Q22 1.500 23 11 Q23 16 18 16.500 Q14 16.500 14.500 13 Q15 9.500 11.500 9 Q7 9 6.500 14 Q6.500 20 13 22.800 Q3 23 1 13Z" fill="#1b6fc4" opacity=".55"/><path d="M14.500 13 Q15 9 11 9 Q8 9.500 7.500 12.500 Q8 8 12 7.500 Q17 8 17 12 Q17 14 15.500 15 Q14.500 14.500 14.500 13Z" fill="#e8f6fb"/><path d="M6.500 14 Q7 20 13 22.800 Q20 22 22 17 Q17 20.500 12 18.500 Q7.500 16.500 7.500 12.500 Q6.600 13 6.500 14Z" fill="#114a8b"/></svg><svg style="left:872px;top:12px;width:24px;height:23px" viewBox="0 0 24 23"><rect x="6.500" y="0.500" width="17.500" height="22" rx="1.500" fill="#2f84d8"/><rect x="6.500" y="6" width="17.500" height="5.500" fill="#1f69c0"/><rect x="6.500" y="11.500" width="17.500" height="5.500" fill="#1857a8"/><path d="M6.500 17 H24 V21 A1.500 1.500 0 0 1 22.500 22.500 H8 A1.500 1.500 0 0 1 6.500 21Z" fill="#103f86"/><rect x="0" y="5.500" width="13" height="12.500" rx="1.300" fill="#1a5fb8"/><text x="6.500" y="15.300" font-size="9.500" font-weight="bold" fill="#fff" text-anchor="middle" font-family="Liberation Sans, sans-serif">W</text></svg><div style="left:909px;top:4.5px;width:38px;height:37px;border-radius:4px;background:rgba(255,255,255,.62);box-shadow:0 0 0 1px rgba(200,206,216,.5)"></div><svg style="left:914.500px;top:11.5px;width:24px;height:24px" viewBox="0 0 24 24"><circle cx="12" cy="12" r="11.500" fill="#fff"/><path d="M12 0.500 A11.500 11.500 0 0 1 21.960 6.250 H12 A5.750 5.750 0 0 0 7.020 9.125 L2.040 6.250 A11.500 11.500 0 0 1 12 0.500Z" fill="#e8453c"/><path d="M21.960 6.250 A11.500 11.500 0 0 1 12 23.500 L16.980 14.875 A5.750 5.750 0 0 0 16.980 9.125 L17 6.250Z" fill="#f9bc15"/><path d="M21.960 6.250 H12 A5.750 5.750 0 0 1 16.980 14.875 L12 23.500 A11.500 11.500 0 0 0 21.960 6.250Z" fill="#f9bc15"/><path d="M2.040 6.250 L7.020 14.875 A5.750 5.750 0 0 0 16.980 14.875 L12 23.500 A11.500 11.500 0 0 1 2.040 6.250Z" fill="#2fa24f"/><circle cx="12" cy="12" r="5.400" fill="#fff"/><circle cx="12" cy="12" r="4.300" fill="#3f86f0"/></svg><div style="left:928.500px;top:6.600000000000023px;width:16px;height:16px;border-radius:8px;background:#e0161c;overflow:hidden"><div style="left:5.500px;top:2px;width:5px;height:7px;border-radius:2.500px;background:#d8a88a"></div><div style="left:5px;top:1.500px;width:6px;height:3px;border-radius:3px 3px 0 0;background:#221c1b"></div><div style="left:2px;top:9px;width:12px;height:8px;border-radius:5px 5px 0 0;background:#1d2233"></div><div style="left:7px;top:9px;width:2px;height:5px;background:#dfe3ee"></div></div><div style="left:920px;top:39px;width:15.500px;height:3px;border-radius:1.500px;background:#1877d4"></div><svg style="left:960px;top:10px;width:27px;height:26px" viewBox="0 0 27 26"><path d="M0.500 6 H5.500 L8 18 L11 6 H14.500 L17.500 18 L20.500 8 L24.500 8 L20 24 H15.500 L12.700 13 L10 24 H5.500Z" fill="#e8392f"/><path d="M14.500 6 L17.500 18 L15.500 24 L12.700 13Z" fill="#b81f1c"/><circle cx="21.500" cy="5.500" r="4.800" fill="#f08a3c"/><rect x="19.300" y="3" width="4.600" height="4.600" rx=".8" fill="none" stroke="#fff" stroke-width=".9"/><path d="M20.600 7.500 V4.300 H22 A.9.9 0 0 1 22 6.100 H20.600" fill="none" stroke="#fff" stroke-width=".8"/></svg><div style="left:970px;top:39px;width:6px;height:3px;border-radius:1.500px;background:#858a92"></div><svg style="left:1119px;top:20px;width:10px;height:7px" viewBox="0 0 10 7"><path d="M0.700 6 L5 1.500 L9.300 6" fill="none" stroke="#1b1b1b" stroke-width="1.300"/></svg><svg style="left:1149px;top:14.5px;width:14px;height:17px" viewBox="0 0 14 17"><rect x="4.200" y="0.700" width="5.600" height="10" rx="2.800" fill="none" stroke="#2a6ac8" stroke-width="1.200"/><path d="M1.200 8 A5.800 5.800 0 0 0 12.800 8 M7 13.800 V16.500" fill="none" stroke="#2a6ac8" stroke-width="1.200"/></svg><svg style="left:1180px;top:16px;width:16px;height:13px" viewBox="0 0 16 13"><path d="M0.800 4.500 Q8 -2 15.200 4.500 M3 7 Q8 2.500 13 7 M5.200 9.300 Q8 7 10.800 9.300" fill="none" stroke="#1b1b1b" stroke-width="1.200"/><circle cx="8" cy="11.300" r="1.200" fill="#1b1b1b"/></svg><svg style="left:1204px;top:16px;width:17px;height:14px" viewBox="0 0 17 14"><path d="M0.700 4.800 H3.500 L7 1.500 V12.500 L3.500 9.200 H0.700Z" fill="none" stroke="#1b1b1b" stroke-width="1.100" stroke-linejoin="round"/><path d="M9.300 4.500 Q10.800 7 9.300 9.500 M11.500 2.800 Q14 7 11.500 11.200 M13.700 1.200 Q17.200 7 13.700 12.800" fill="none" stroke="#1b1b1b" stroke-width="1.100"/></svg><svg style="left:1228px;top:18.5px;width:17px;height:10px" viewBox="0 0 17 10"><rect x="0.600" y="0.600" width="13.300" height="8.800" rx="2" fill="none" stroke="#1b1b1b" stroke-width="1.200"/><rect x="2.300" y="2.400" width="6" height="5.200" rx=".6" fill="#1b1b1b"/><path d="M15 3.200 Q16.500 3.500 16.500 5 Q16.500 6.500 15 6.800Z" fill="#1b1b1b"/></svg><div id="w4" style="left:1223px;top:8.100000000000023px;width:100px;text-align:right;font-size:12px;line-height:15px;color:#1b1b1b;white-space:nowrap">17:16</div><div id="w5" style="left:1223px;top:24.100000000000023px;width:100px;text-align:right;font-size:12px;line-height:15px;color:#1b1b1b;white-space:nowrap">17/05/2023</div><svg style="left:1330px;top:14px;width:17px;height:18px" viewBox="0 0 17 18"><path d="M2 13.500 H13 Q11.500 12 11.500 9.500 V7.500 A4 4 0 0 0 3.500 7.500 V9.500 Q3.500 12 2 13.500Z" fill="#1b1b1b"/><path d="M6 15 A1.600 1.600 0 0 0 9 15Z" fill="#1b1b1b"/><text x="5.500" y="11" font-size="5.500" font-weight="bold" fill="#fff" font-family="Liberation Sans, sans-serif">z</text><text x="9.500" y="7.500" font-size="6.500" font-weight="bold" fill="#1b1b1b" font-family="Liberation Sans, sans-serif">z</text><text x="12.500" y="4.800" font-size="5.500" font-weight="bold" fill="#1b1b1b" font-family="Liberation Sans, sans-serif">z</text></svg></div>

</div>
</body>
</html>
